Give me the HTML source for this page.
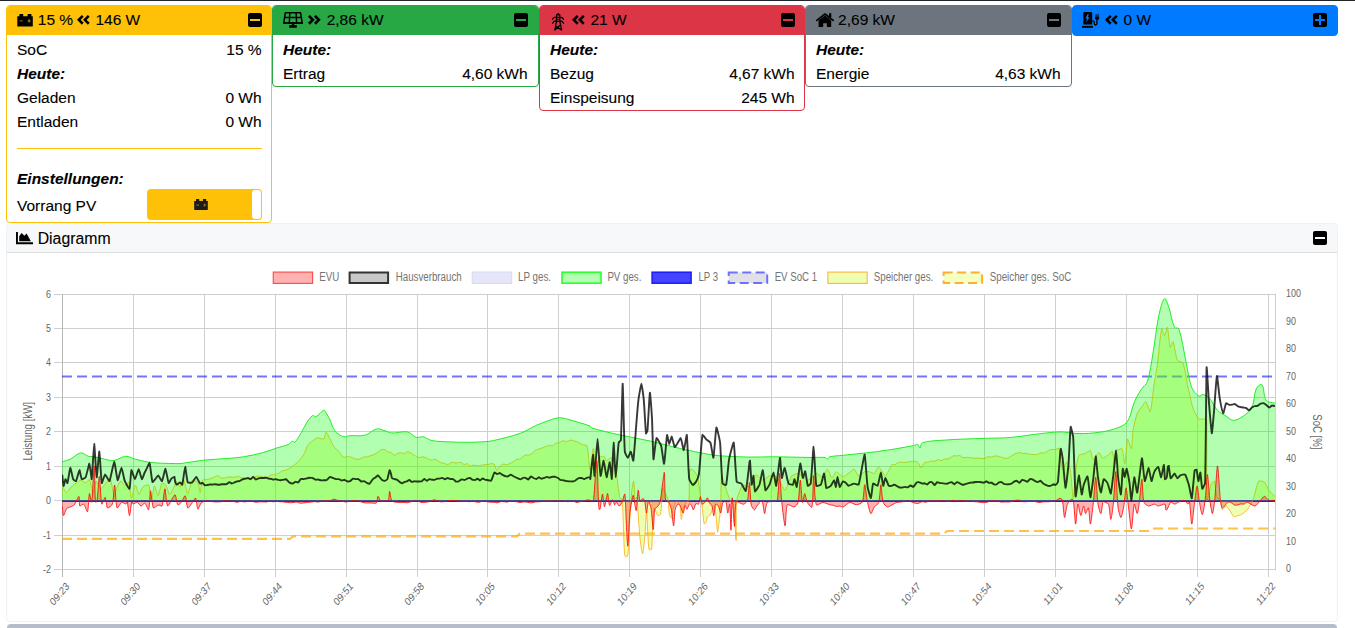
<!DOCTYPE html>
<html><head><meta charset="utf-8">
<style>
*{box-sizing:border-box;margin:0;padding:0}
html,body{width:1355px;height:628px;overflow:hidden;background:#fff}
body{font-family:"Liberation Sans",sans-serif;font-size:15.5px;line-height:24px;color:#000;position:relative;-webkit-text-stroke:0.1px #000}
.a{position:absolute;white-space:nowrap}
.card{position:absolute;top:5px;border:1px solid;border-radius:4px;background:#fff;overflow:hidden}
.hd{position:absolute;left:0;top:0;right:0;height:29px}
.t{position:absolute;white-space:nowrap;line-height:24px;height:24px}
.r{position:absolute;white-space:nowrap;line-height:24px;height:24px;text-align:right}
.bi{font-weight:bold;font-style:italic}
.sq{position:absolute;top:13px;width:14px;height:14px;background:#000;border-radius:2px}
.sq i{position:absolute;left:2px;top:5.9px;width:10px;height:2.3px}
.sq b{position:absolute;left:5.85px;top:2px;width:2.3px;height:10px}
svg{position:absolute;overflow:visible;-webkit-text-stroke:0}
</style></head><body>
<div class="a" style="left:0;top:0;width:1355px;height:1px;background:#20252a"></div>

<!-- card backgrounds -->
<div class="card" style="left:6px;width:266px;height:218px;border-color:#ffc107"><div class="hd" style="background:#ffc107"></div></div>
<div class="card" style="left:272px;width:267px;height:82px;border-color:#28a745"><div class="hd" style="background:#28a745"></div></div>
<div class="card" style="left:539px;width:266px;height:106px;border-color:#dc3545"><div class="hd" style="background:#dc3545"></div></div>
<div class="card" style="left:805px;width:267px;height:82px;border-color:#6c757d"><div class="hd" style="background:#6c757d"></div></div>
<div class="card" style="left:1072px;width:266px;height:31px;border-color:#007bff;background:#007bff"></div>

<!-- squares -->
<div class="sq" style="left:248px"><i style="background:#ffc107"></i></div>
<div class="sq" style="left:514px"><i style="background:#28a745"></i></div>
<div class="sq" style="left:781px"><i style="background:#dc3545"></i></div>
<div class="sq" style="left:1047px"><i style="background:#6c757d"></i></div>
<div class="sq" style="left:1312.8px"><i style="background:#007bff"></i><b style="background:#007bff"></b></div>

<!-- header icons -->
<!-- battery -->
<svg style="left:16.5px;top:13.5px" width="16" height="12.5" viewBox="0 0 16 12.5"><path d="M2.4 0h3.8v2.5h-3.8zM10.6 0h3.8v2.5h-3.8zM0.3 2.3h15.5a0 0 0 0 1 0 0v9.6a0.5 0.5 0 0 1 -0.5 0.5h-14.5a0.5 0.5 0 0 1 -0.5 -0.5z" fill="#000"/><rect x="2.6" y="6.3" width="3.2" height="1.2" fill="#7a5a00"/><rect x="10.5" y="6.3" width="3.2" height="1.2" fill="#7a5a00"/><rect x="11.5" y="5.3" width="1.2" height="3.2" fill="#a0a000"/></svg>
<!-- angle double left (battery) -->
<svg style="left:76.8px;top:15.1px" width="12.7" height="9.7" viewBox="0 0 12.7 9.7"><path d="M5.77 0.92L1.84 4.85L5.77 8.78M11.77 0.92L7.84 4.85L11.77 8.78" fill="none" stroke="#000" stroke-width="2.6" stroke-linecap="butt"/></svg>
<!-- solar panel -->
<svg style="left:283px;top:12px" width="20" height="16" viewBox="0 0 20 16"><path d="M2.3 0.75H17.6L19.2 11H0.75Z" fill="none" stroke="#000" stroke-width="1.5" stroke-linejoin="round"/><path d="M6.8 0.8L6.3 11M13.1 0.8L13.6 11M1.5 5.5H18.3" stroke="#000" stroke-width="1.4" fill="none"/><rect x="0" y="10.3" width="19.9" height="1.5" fill="#000"/><rect x="8.9" y="11.5" width="2.2" height="2" fill="#000"/><rect x="6.2" y="13.1" width="7.6" height="2.7" rx="0.4" fill="#000"/></svg>
<!-- angle double right (pv) -->
<svg style="left:308.1px;top:15.1px" width="12.7" height="9.7" viewBox="0 0 12.7 9.7"><path d="M0.93 0.92L4.86 4.85L0.93 8.78M6.93 0.92L10.86 4.85L6.93 8.78" fill="none" stroke="#000" stroke-width="2.6" stroke-linecap="butt"/></svg>
<!-- pylon -->
<svg style="left:551.8px;top:13px" width="12.4" height="17.7" viewBox="0 0 12.4 17.7"><g fill="none" stroke="#000" stroke-width="1.25" stroke-linecap="round" stroke-linejoin="round"><path d="M4.5 1.9V8.4M7.9 1.9V8.4M4.5 1.9H7.9M4.5 4.2H7.9M4.5 6.3H7.9M4.5 8.4H7.9" stroke-width="1.1"/><path d="M4.5 4.6Q1.6 3.6 0.7 6.3M7.6 4.6Q10.5 3.6 11.5 6.3M4.5 8Q1.6 7.5 0.7 10.3M7.6 8Q10.5 7.5 11.5 10.3"/><path d="M4.5 8.4L2.9 17M7.9 8.4L9.6 17M8.3 12L2.9 17M4.4 13.6L9 16.8"/></g><rect x="5.3" y="0.2" width="1.8" height="1.8" fill="#000"/></svg>
<!-- angle double left (evu) -->
<svg style="left:572.4px;top:15.1px" width="12.7" height="9.7" viewBox="0 0 12.7 9.7"><path d="M5.77 0.92L1.84 4.85L5.77 8.78M11.77 0.92L7.84 4.85L11.77 8.78" fill="none" stroke="#000" stroke-width="2.6" stroke-linecap="butt"/></svg>
<!-- home -->
<svg style="left:815.9px;top:13px" width="18" height="14" viewBox="0 0 18 14"><path d="M0.8 7.4L9 1L17.2 7.4" fill="none" stroke="#000" stroke-width="1.7" stroke-linecap="round" stroke-linejoin="round"/><rect x="13" y="0.2" width="2.3" height="4" fill="#000"/><path d="M2.6 7.2L9 2.4L15.2 7.2V13.9H10.9V10.3H7.2V13.9H2.6Z" fill="#000"/></svg>
<!-- charging station -->
<svg style="left:1082px;top:12px" width="18.1" height="15.8" viewBox="0 0 18.1 15.8"><path d="M1.3 1.4Q1.3 0 2.7 0H8.8Q10.2 0 10.2 1.4V12.5H1.3Z" fill="#000"/><path d="M5.4 2.2L3.4 6.6H5.1L4.2 10.2L7.6 5.3H5.8L6.9 2.2Z" fill="#007bff"/><rect x="0" y="13.9" width="11" height="1.9" fill="#000"/><path d="M10.2 8.8Q12.3 8.8 12.3 10.5V11.6Q12.3 13 13.6 13Q14.9 13 14.9 11.6V7.6" fill="none" stroke="#000" stroke-width="1.3"/><path d="M13.1 4.8H17.1V6.5Q17.1 7.9 15.1 7.9Q13.1 7.9 13.1 6.5Z" fill="#000"/><rect x="13.6" y="2.2" width="1" height="2.8" fill="#000"/><rect x="15.6" y="2.2" width="1" height="2.8" fill="#000"/></svg>
<!-- angle double left (lp) -->
<svg style="left:1105.2px;top:15.1px" width="12.7" height="9.7" viewBox="0 0 12.7 9.7"><path d="M5.77 0.92L1.84 4.85L5.77 8.78M11.77 0.92L7.84 4.85L11.77 8.78" fill="none" stroke="#000" stroke-width="2.6" stroke-linecap="butt"/></svg>

<!-- header texts -->
<div class="t" style="left:37.8px;top:8.2px">15 %</div>
<div class="t" style="left:95.4px;top:8.2px">146 W</div>
<div class="t" style="left:326.7px;top:8.2px">2,86 kW</div>
<div class="t" style="left:590.5px;top:8.2px">21 W</div>
<div class="t" style="left:838.1px;top:8.2px">2,69 kW</div>
<div class="t" style="left:1123.5px;top:8.2px">0 W</div>

<!-- battery body -->
<div class="t" style="left:17px;top:37.5px">SoC</div><div class="r" style="right:1093.4px;top:37.5px">15 %</div>
<div class="t bi" style="left:17px;top:61.5px">Heute:</div>
<div class="t" style="left:17px;top:85.5px">Geladen</div><div class="r" style="right:1093.4px;top:85.5px">0 Wh</div>
<div class="t" style="left:17px;top:109.5px">Entladen</div><div class="r" style="right:1093.4px;top:109.5px">0 Wh</div>
<div class="a" style="left:17px;top:148px;width:245px;height:1px;background:#ffc107"></div>
<div class="t bi" style="left:17px;top:166.8px">Einstellungen:</div>
<div class="t" style="left:17px;top:193.8px">Vorrang PV</div>
<div class="a" style="left:147px;top:189px;width:115px;height:31px;background:#ffc107;border-radius:4px"></div>
<div class="a" style="left:251.8px;top:190.2px;width:9.2px;height:28.8px;background:#fff;border-radius:3px"></div>
<svg style="left:194px;top:199px" width="14" height="11" viewBox="0 0 14 11"><path d="M2 0h3.3v2.2h-3.3zM8.9 0h3.3v2.2h-3.3zM0.2 2h13.6v8.6a0.4 0.4 0 0 1 -0.4 0.4h-12.8a0.4 0.4 0 0 1 -0.4 -0.4z" fill="#1c1c1c"/><rect x="2.2" y="5.6" width="2.8" height="1" fill="#9a7a10"/><rect x="9.3" y="5.6" width="2.8" height="1" fill="#9a7a10"/><rect x="10.2" y="4.7" width="1" height="2.8" fill="#9a7a10"/></svg>

<!-- pv body -->
<div class="t bi" style="left:283px;top:37.5px">Heute:</div>
<div class="t" style="left:283px;top:61.5px">Ertrag</div><div class="r" style="right:827.4px;top:61.5px">4,60 kWh</div>
<!-- evu body -->
<div class="t bi" style="left:550px;top:37.5px">Heute:</div>
<div class="t" style="left:550px;top:61.5px">Bezug</div><div class="r" style="right:560.4px;top:61.5px">4,67 kWh</div>
<div class="t" style="left:550px;top:85.5px">Einspeisung</div><div class="r" style="right:560.4px;top:85.5px">245 Wh</div>
<!-- haus body -->
<div class="t bi" style="left:816px;top:37.5px">Heute:</div>
<div class="t" style="left:816px;top:61.5px">Energie</div><div class="r" style="right:294.4px;top:61.5px">4,63 kWh</div>

<!-- Diagram card -->
<div class="card" style="left:6px;top:223px;width:1332px;height:399px;border-color:#f0f1f3"></div>
<div class="a" style="left:7px;top:224px;width:1330px;height:29px;background:#f7f8f9;border-bottom:1.5px solid #dcdee0;border-radius:3px 3px 0 0"></div>
<svg style="left:16px;top:231.8px" width="17" height="12.2" viewBox="0 0 17 12.2"><path d="M0 0H1.9V10.3H17V12.2H0Z" fill="#000"/><path d="M3.2 9.3V4.2L5.6 0.9L8.4 3.7L10.6 1.6L14.9 9.3Z" fill="#000"/></svg>
<div class="t" style="left:37.7px;top:227px;font-size:15.8px">Diagramm</div>
<div class="sq" style="left:1313px;top:231px"><i style="background:#fff"></i></div>
<div class="a" style="left:7px;top:623.5px;width:1330px;height:10px;background:#b6bdca;border-radius:4px"></div>
<!--CHART--><svg id="chartsvg" width="1355" height="628" viewBox="0 0 1355 628" style="position:absolute;left:0;top:0">
<path d="M54,294.5 H1276 M54,328.5 H1276 M54,362.5 H1276 M54,397.5 H1276 M54,431.5 H1276 M54,466.5 H1276 M54,500.5 H1276 M54,535.5 H1276 M54,569.5 H1276 M62.5,294 V577 M133.5,294 V577 M204.5,294 V577 M275.5,294 V577 M346.5,294 V577 M417.5,294 V577 M487.5,294 V577 M558.5,294 V577 M629.5,294 V577 M700.5,294 V577 M771.5,294 V577 M842.5,294 V577 M913.5,294 V577 M984.5,294 V577 M1055.5,294 V577 M1126.5,294 V577 M1197.5,294 V577 M1268.5,294 V577 M1275.5,294 V569.5" stroke="#cfcfcf" stroke-width="1" fill="none"/>
<path d="M62.5,294 V577" stroke="#b5b5b5" stroke-width="1" fill="none"/>
<defs><clipPath id="pc"><rect x="62" y="288" width="1213" height="283"/></clipPath></defs>
<g clip-path="url(#pc)">
<path d="M62.0,538.9 L290.0,538.9 L293.0,536.4 L517.0,536.4 L520.0,533.7 L944.0,533.7 L947.0,531.0 L1151.0,531.0 L1154.0,528.5 L1275.0,528.5" stroke="rgba(255,165,0,0.7)" stroke-width="2.2" stroke-dasharray="10,5" fill="none"/>
<path d="M62,376.5 H1275" stroke="rgba(0,0,255,0.55)" stroke-width="2.2" stroke-dasharray="10,5" fill="none"/>
<path d="M62,501 H1275" stroke="#1a1aff" stroke-width="2" fill="none"/>
<path d="M62.0,500.6 L62.0,485.9 C62.1,485.9 62.2,485.9 62.3,485.9 C63.1,487.2 65.5,492.5 66.5,492.6 C67.3,492.7 70.2,487.9 71.2,486.9 C72.1,486.0 75.0,483.8 76.0,483.1 C76.9,482.4 79.8,480.2 80.8,480.2 C81.8,480.2 84.7,483.1 85.6,483.1 C86.4,483.0 89.0,479.1 89.4,479.6 C90.5,481.0 92.5,492.4 93.2,492.6 C93.8,492.8 95.2,481.6 96.1,481.1 C96.7,480.8 99.8,488.7 100.9,488.8 C101.9,488.9 105.4,483.3 106.6,482.1 C107.3,481.4 110.1,478.6 110.4,479.2 C111.6,481.5 113.4,495.5 114.2,496.4 C114.7,497.0 116.3,488.7 117.1,486.9 C117.6,485.6 120.1,481.2 120.9,481.1 C121.6,481.1 123.9,485.8 124.7,485.9 C125.5,486.0 128.2,481.5 128.6,482.1 C129.6,484.0 130.7,498.0 131.4,498.3 C132.0,498.6 134.4,485.4 135.3,485.0 C135.9,484.6 138.2,494.3 139.1,494.5 C139.8,494.7 141.8,488.0 142.9,486.9 C143.7,486.1 148.1,484.2 148.6,485.0 C149.9,486.9 150.9,500.2 151.5,500.3 C152.1,500.3 153.6,486.5 154.4,485.9 C154.9,485.5 157.5,495.7 158.2,495.5 C159.0,495.2 160.9,484.6 162.0,483.1 C162.4,482.5 165.4,484.3 165.8,485.0 C166.9,486.6 168.8,494.5 169.6,494.5 C170.6,494.5 174.2,487.0 175.0,485.0 C175.4,484.1 175.2,480.1 175.6,480.2 C176.2,480.5 179.3,487.0 180.0,486.9 C180.8,486.8 182.8,478.6 183.4,479.1 C184.4,480.0 186.9,493.5 187.8,493.6 C188.7,493.7 190.9,481.8 192.3,480.2 C192.9,479.6 197.3,481.5 197.9,482.5 C198.8,484.0 199.7,492.7 200.1,492.5 C200.6,492.2 201.5,482.3 202.3,480.2 C202.5,479.7 204.8,479.8 205.4,479.7 C206.0,479.6 207.8,479.5 208.4,479.3 C209.1,479.2 210.9,478.6 211.5,478.3 C212.1,478.1 213.9,477.1 214.6,476.9 C215.2,476.6 217.3,475.5 217.9,475.7 C218.6,475.8 220.5,477.8 221.3,478.0 C221.9,478.2 223.9,478.0 224.6,477.9 C225.3,477.8 227.3,477.0 227.9,476.9 C228.5,476.8 230.4,477.0 231.1,477.0 C231.7,477.1 233.6,477.5 234.2,477.4 C234.8,477.4 236.7,476.3 237.3,476.3 C237.9,476.3 239.8,477.0 240.4,477.2 C241.0,477.4 242.9,477.9 243.5,478.0 C244.2,478.1 246.2,478.5 246.9,478.5 C247.5,478.5 249.6,478.5 250.2,478.4 C250.9,478.3 252.9,478.0 253.6,477.7 C254.3,477.5 256.2,476.1 256.9,476.0 C257.5,475.8 259.6,476.2 260.3,476.3 C260.9,476.4 262.9,476.8 263.6,476.9 C264.3,477.0 266.6,477.6 267.3,477.4 C268.1,477.2 270.2,475.1 271.0,474.8 C271.7,474.6 274.0,474.8 274.7,474.7 C275.5,474.5 277.7,473.6 278.4,473.3 C279.2,472.9 281.4,471.2 282.2,470.9 C282.9,470.6 285.2,470.5 285.9,470.2 C286.8,469.9 289.5,468.4 290.3,467.9 C291.3,467.3 293.9,465.3 294.8,464.6 C295.7,463.9 298.5,461.5 299.2,460.6 C300.2,459.5 303.0,455.9 303.7,454.6 C304.8,452.7 307.0,446.4 308.2,444.6 C308.8,443.6 311.7,441.6 312.6,440.9 C313.5,440.2 316.1,438.0 317.1,437.9 C318.3,437.7 322.9,439.5 323.8,439.0 C324.7,438.4 325.4,433.2 326.0,432.3 C326.1,432.1 327.1,433.1 327.2,433.4 C327.9,434.5 329.4,437.9 330.0,439.0 C330.8,440.6 332.9,445.4 333.9,446.8 C334.6,447.8 337.6,450.0 338.4,450.9 C339.4,452.0 341.8,456.0 342.8,456.8 C343.3,457.2 345.5,456.9 346.2,456.9 C346.8,456.8 348.9,456.5 349.5,456.6 C350.2,456.8 352.2,457.8 352.9,458.1 C353.5,458.3 355.5,458.9 356.2,459.1 C356.9,459.2 359.2,459.3 359.9,459.1 C360.7,458.9 362.8,457.3 363.6,457.1 C364.3,456.9 366.6,457.0 367.3,456.8 C368.1,456.7 370.2,455.8 371.0,455.5 C371.7,455.3 373.9,454.7 374.6,454.4 C375.4,454.0 377.5,452.4 378.2,452.0 C378.9,451.5 381.0,449.7 381.8,449.5 C382.4,449.3 384.3,449.4 384.9,449.7 C385.6,450.0 387.3,451.7 388.0,452.0 C388.5,452.3 390.5,452.3 391.0,452.5 C391.7,452.9 393.4,455.2 394.1,455.3 C394.7,455.4 396.7,453.8 397.4,453.5 C398.1,453.3 400.1,452.7 400.8,452.7 C401.4,452.7 403.5,453.8 404.1,453.7 C404.8,453.6 406.8,451.7 407.5,451.7 C408.2,451.7 410.5,452.9 411.2,453.2 C411.9,453.6 414.1,455.2 414.9,455.6 C415.6,456.0 417.8,457.4 418.6,457.5 C419.4,457.6 422.2,456.8 423.1,456.9 C424.0,457.0 426.6,458.0 427.5,458.4 C428.2,458.7 430.2,460.1 430.8,460.2 C431.5,460.3 433.5,459.2 434.2,459.3 C434.9,459.3 436.9,460.1 437.5,460.4 C438.3,460.8 440.1,462.5 440.9,462.8 C441.5,463.1 443.6,463.0 444.2,463.2 C444.9,463.4 446.9,464.7 447.6,464.6 C448.5,464.5 451.1,462.6 452.0,462.4 C452.6,462.3 454.5,462.9 455.1,462.9 C455.7,463.0 457.5,462.8 458.1,462.8 C458.8,462.7 460.7,462.4 461.2,462.6 C461.9,462.7 463.6,464.4 464.3,464.6 C464.8,464.7 466.8,463.5 467.3,463.6 C468.0,463.8 469.7,466.0 470.4,466.2 C471.0,466.3 472.8,465.1 473.5,465.1 C474.1,465.0 475.9,465.7 476.5,465.7 C477.4,465.8 479.9,465.5 480.8,465.4 C481.6,465.3 484.1,464.7 485.0,464.6 C485.6,464.5 487.5,464.6 488.2,464.5 C488.8,464.4 490.7,463.5 491.3,463.5 C492.0,463.5 494.1,464.1 494.5,464.6 C495.2,465.5 496.1,470.0 496.7,470.2 C497.2,470.4 499.3,467.1 500.1,466.4 C500.7,465.8 502.7,464.1 503.4,464.0 C504.0,463.8 506.1,464.9 506.7,464.8 C507.4,464.8 509.4,463.6 510.1,463.3 C510.8,463.0 512.8,462.2 513.4,461.8 C514.1,461.4 516.0,459.6 516.8,459.3 C517.4,459.0 519.5,459.3 520.1,459.1 C520.8,458.7 522.5,456.8 523.2,456.4 C523.8,456.0 525.7,455.1 526.4,455.0 C526.9,454.8 528.9,455.2 529.5,455.0 C530.1,454.8 532.0,453.6 532.6,453.2 C533.3,452.6 535.0,450.6 535.7,450.1 C536.3,449.8 538.4,449.2 539.1,449.0 C539.7,448.8 541.7,448.1 542.4,447.9 C543.1,447.6 545.1,446.8 545.7,446.5 C546.4,446.3 548.4,445.4 549.1,445.4 C549.7,445.3 551.8,445.9 552.4,445.8 C553.2,445.6 555.0,443.8 555.8,443.5 C556.4,443.2 558.7,442.9 559.4,442.6 C560.1,442.3 562.3,440.8 563.0,440.7 C563.7,440.6 565.9,441.7 566.6,441.7 C567.4,441.6 569.5,440.2 570.3,440.1 C571.0,440.0 573.4,440.6 574.2,440.9 C574.9,441.1 577.3,442.0 578.1,442.3 C579.0,442.8 581.6,444.4 582.5,444.7 C583.4,445.0 586.7,444.9 587.0,445.7 C588.2,449.9 589.4,469.5 590.0,469.8 C590.6,470.1 592.3,452.7 593.0,448.6 C593.0,448.5 593.6,448.9 593.6,449.0 C594.2,453.7 595.4,471.8 596.0,472.8 C596.5,473.5 597.9,460.3 599.1,457.7 C599.4,456.9 602.9,455.9 603.6,456.2 C604.4,456.5 605.9,460.6 606.6,460.7 C607.4,460.9 610.6,457.2 611.2,457.7 C612.4,459.0 615.1,467.3 615.7,469.8 C616.7,474.0 618.1,486.8 618.7,491.0 C618.9,492.1 619.4,495.5 619.7,496.6 C620.1,497.6 622.2,500.5 622.3,501.7 C622.9,507.4 623.3,525.1 623.6,531.0 C623.8,535.9 624.1,551.2 624.8,555.8 C624.9,556.3 627.2,556.8 627.4,556.4 C628.0,554.9 628.5,548.3 628.7,546.2 C629.0,540.6 629.6,523.8 629.9,518.2 C630.3,512.6 631.3,495.8 631.8,490.2 C632.0,488.4 633.0,482.8 633.4,481.3 C633.4,481.1 633.8,481.8 633.9,481.9 C634.2,485.3 634.5,496.5 635.0,499.1 C635.1,499.5 636.8,496.6 636.9,497.0 C637.6,501.7 638.4,519.1 638.9,524.6 C639.2,528.7 640.2,540.9 640.8,545.0 C641.0,546.8 642.4,554.4 642.7,553.9 C643.2,553.1 644.3,541.7 644.6,538.6 C645.1,533.3 646.1,512.4 646.5,511.8 C646.8,511.4 647.5,529.2 647.8,533.5 C648.0,536.7 648.4,546.7 649.0,549.4 C649.1,549.9 651.5,549.9 651.6,549.4 C652.3,543.7 652.5,524.4 652.9,518.2 C653.0,516.2 653.7,508.9 654.1,508.0 C654.3,507.7 655.7,511.1 656.1,511.8 C656.4,512.6 657.4,515.4 658.0,515.7 C658.3,515.9 660.4,514.9 660.5,514.4 C661.2,511.6 661.5,502.2 661.8,499.1 C662.0,496.9 662.0,488.2 662.6,488.0 C663.1,487.8 666.4,495.2 667.1,497.0 C667.5,497.9 668.0,500.7 668.2,501.7 C668.5,504.2 668.9,511.9 669.4,514.4 C669.6,515.2 671.1,518.6 671.3,518.2 C671.9,517.3 672.6,510.0 673.2,508.0 C673.7,506.7 675.7,501.9 676.4,501.7 C677.0,501.4 679.7,504.5 680.0,505.5 C680.7,508.1 680.9,519.2 681.3,519.5 C681.6,519.7 682.5,510.2 683.2,508.0 C683.6,506.8 685.6,503.3 686.4,502.3 C686.7,501.8 688.9,501.0 688.9,500.4 C689.5,494.5 689.1,475.4 689.8,469.8 C689.9,469.3 692.4,469.5 692.8,469.8 C693.9,470.7 697.0,474.4 697.4,475.9 C698.6,480.7 700.3,496.0 701.0,501.0 C701.2,502.4 702.1,506.6 702.3,508.0 C702.7,511.2 703.5,521.6 704.2,523.9 C704.3,524.4 705.9,522.5 706.1,522.0 C706.5,521.1 706.9,517.8 707.4,516.9 C707.8,516.3 710.2,515.1 710.6,514.4 C711.2,513.3 712.0,509.2 712.5,508.0 C712.7,507.4 714.2,505.1 714.4,505.5 C715.0,507.1 716.0,515.7 716.3,518.2 C716.6,521.0 717.3,532.2 717.6,532.2 C717.9,532.2 719.2,521.0 719.5,518.2 C719.8,515.0 720.6,505.5 720.8,502.3 C721.0,497.0 720.9,477.6 721.6,475.9 C721.9,474.9 725.0,486.3 725.9,488.9 C726.8,491.3 729.3,498.7 730.3,501.0 C730.8,502.0 733.3,504.4 733.5,505.5 C734.5,512.3 735.8,540.9 736.1,540.5 C736.4,540.0 735.8,508.8 736.7,501.0 C737.1,497.6 740.9,486.9 742.7,484.9 C743.5,484.1 748.6,487.6 749.5,486.9 C751.2,485.5 754.5,475.5 756.1,474.7 C757.2,474.1 761.4,480.1 762.8,480.2 C764.1,480.3 768.1,476.1 769.5,475.8 C770.7,475.5 775.2,476.2 776.2,476.9 C777.4,477.7 779.8,481.9 780.7,483.2 C781.6,484.6 784.3,490.8 785.1,490.3 C786.6,489.3 789.9,478.1 791.8,475.8 C792.6,474.7 797.2,473.5 798.5,473.5 C799.4,473.6 802.1,475.7 802.9,476.3 C803.9,477.0 806.4,480.1 807.4,480.2 C808.2,480.3 811.0,478.2 811.9,477.6 C812.8,476.9 815.3,473.6 816.3,473.5 C817.5,473.5 822.0,477.3 823.0,476.9 C824.2,476.4 826.6,469.0 827.5,469.1 C828.4,469.2 830.9,477.7 831.9,478.0 C832.7,478.2 835.3,471.9 836.4,471.8 C837.5,471.6 841.7,476.8 843.1,476.9 C844.4,476.9 848.4,473.3 849.7,472.4 C850.6,471.8 853.5,468.8 854.2,469.1 C855.2,469.5 857.5,475.5 858.6,475.8 C859.8,476.0 863.9,471.8 865.3,471.3 C866.1,471.0 868.9,471.7 869.8,471.9 C870.7,472.1 873.6,473.9 874.2,473.5 C875.4,472.9 877.8,466.7 878.7,466.9 C880.0,467.1 884.2,476.0 885.4,475.8 C886.8,475.5 890.5,466.4 892.1,464.6 C892.5,464.2 894.7,464.7 895.3,464.5 C896.0,464.2 897.8,462.5 898.5,462.2 C899.1,462.0 901.1,462.3 901.8,462.3 C902.4,462.3 904.4,462.4 905.0,462.4 C905.8,462.3 908.3,461.9 909.2,461.7 C910.0,461.6 912.5,461.2 913.4,461.3 C914.3,461.3 917.2,461.8 917.8,462.4 C918.7,463.2 920.5,468.0 921.2,468.0 C921.8,468.0 923.6,463.2 924.5,462.4 C925.0,462.0 927.2,462.4 927.9,462.2 C928.5,462.1 930.5,461.0 931.2,460.9 C931.8,460.8 933.9,461.4 934.5,461.3 C935.2,461.2 937.2,459.9 937.9,459.8 C938.5,459.7 940.6,460.6 941.2,460.6 C941.9,460.5 943.9,459.2 944.6,459.1 C945.4,458.8 948.2,458.9 949.0,458.6 C950.0,458.3 952.5,456.0 953.5,455.7 C954.0,455.5 956.0,456.1 956.6,456.0 C957.2,456.0 959.2,455.2 959.7,455.4 C960.4,455.6 962.2,457.4 962.8,457.6 C963.4,457.8 965.3,457.3 966.0,457.3 C966.6,457.3 968.5,457.6 969.1,457.6 C969.7,457.7 971.6,458.0 972.2,458.0 C972.8,458.1 974.7,458.0 975.3,458.0 C975.9,458.0 977.8,458.1 978.4,458.2 C979.1,458.2 980.9,458.5 981.6,458.5 C982.2,458.5 984.1,458.6 984.7,458.4 C985.4,458.2 987.3,456.7 988.0,456.6 C988.7,456.5 990.7,457.2 991.4,457.1 C992.0,457.1 994.0,456.1 994.7,456.0 C995.4,455.9 997.4,456.0 998.1,456.2 C999.0,456.3 1001.6,457.4 1002.5,457.6 C1003.4,457.8 1006.1,458.5 1007.0,458.4 C1007.9,458.2 1010.5,456.4 1011.4,455.9 C1012.3,455.4 1014.9,453.9 1015.9,453.5 C1016.6,453.2 1018.7,452.5 1019.4,452.5 C1020.2,452.5 1022.3,453.4 1023.0,453.5 C1023.7,453.5 1025.9,453.3 1026.6,453.4 C1027.3,453.4 1029.4,454.2 1030.1,454.3 C1030.8,454.4 1033.0,454.6 1033.7,454.6 C1034.4,454.6 1036.7,454.5 1037.4,454.4 C1038.2,454.2 1040.4,453.0 1041.1,452.9 C1041.8,452.7 1044.2,453.3 1044.8,453.0 C1045.8,452.7 1048.3,450.3 1049.3,450.0 C1050.1,449.6 1052.9,449.5 1053.8,449.5 C1054.0,449.5 1054.8,449.7 1055.0,449.6 C1055.8,449.5 1058.6,448.0 1058.8,448.7 C1060.1,452.1 1061.6,467.8 1062.6,469.7 C1063.1,470.4 1065.7,462.0 1066.5,462.0 C1067.2,462.0 1070.0,468.0 1070.3,469.7 C1071.3,475.3 1072.6,498.3 1073.2,498.3 C1073.7,498.3 1075.3,475.4 1076.0,469.7 C1076.4,466.8 1077.6,457.6 1078.9,455.4 C1079.5,454.3 1084.3,454.0 1085.6,453.4 C1086.6,453.0 1089.8,450.1 1090.4,450.6 C1091.3,451.4 1092.3,459.9 1093.2,460.1 C1094.1,460.3 1097.8,452.7 1098.9,452.5 C1099.7,452.3 1101.8,457.9 1102.8,458.2 C1103.5,458.5 1106.6,456.0 1107.5,455.4 C1108.5,454.7 1111.9,451.0 1112.3,451.5 C1113.2,452.7 1113.9,463.9 1114.2,463.9 C1114.6,463.9 1115.1,453.6 1116.1,451.5 C1116.7,450.5 1121.4,447.9 1121.9,448.7 C1123.1,450.4 1124.3,464.7 1124.7,463.9 C1125.5,462.8 1126.7,441.3 1127.6,439.1 C1128.0,438.2 1131.0,449.3 1131.4,448.7 C1132.1,447.6 1132.4,434.0 1133.0,430.4 C1133.5,427.0 1136.1,416.5 1137.3,413.2 C1137.8,411.8 1140.6,408.2 1141.6,406.9 C1142.4,405.9 1145.2,401.4 1145.9,401.8 C1146.9,402.4 1149.7,412.7 1150.2,411.8 C1151.3,409.8 1153.0,392.1 1153.7,387.2 C1154.4,382.6 1156.7,369.1 1157.3,364.5 C1158.3,357.4 1160.4,333.4 1161.6,328.7 C1161.9,327.7 1164.0,336.0 1164.5,335.9 C1165.1,335.7 1167.0,326.6 1167.4,327.3 C1168.1,328.8 1169.4,345.1 1170.2,347.3 C1170.5,348.0 1172.7,340.9 1173.1,341.6 C1174.2,343.5 1175.9,357.0 1177.4,360.2 C1177.9,361.3 1182.7,362.0 1183.1,363.1 C1184.7,366.9 1186.5,380.3 1187.4,384.6 C1188.5,389.5 1191.6,404.2 1193.2,408.9 C1193.9,411.1 1197.4,417.6 1198.9,419.0 C1199.6,419.6 1203.5,418.8 1204.6,419.0 C1205.1,419.0 1206.6,419.6 1206.7,420.0 C1207.1,435.8 1206.3,489.4 1207.0,500.3 C1207.2,502.4 1209.8,487.8 1210.9,485.0 C1211.2,484.0 1214.0,480.6 1214.3,481.1 C1215.2,482.9 1215.7,493.6 1216.6,496.4 C1216.9,497.4 1220.0,499.3 1220.4,500.3 C1221.2,502.0 1221.6,509.1 1222.3,509.8 C1222.7,510.2 1225.4,505.9 1226.1,506.0 C1227.0,506.1 1229.2,509.9 1230.0,510.9 C1230.8,512.0 1232.8,515.9 1233.8,516.5 C1234.3,516.9 1236.9,516.0 1237.6,515.8 C1238.4,515.6 1240.8,515.0 1241.4,514.6 C1242.7,513.8 1246.2,511.0 1247.2,509.8 C1248.5,508.1 1252.1,502.3 1252.9,500.3 C1254.4,496.6 1256.9,484.0 1258.6,481.1 C1259.1,480.3 1263.6,481.4 1264.4,482.1 C1265.7,483.3 1268.0,489.1 1269.1,490.7 C1270.1,492.0 1273.8,495.3 1275.0,496.4 L1275.0,500.6 Z" fill="rgba(200,255,0,0.3)" stroke="none"/>
<path d="M62.0,485.9 C62.1,485.9 62.2,485.9 62.3,485.9 C63.1,487.2 65.5,492.5 66.5,492.6 C67.3,492.7 70.2,487.9 71.2,486.9 C72.1,486.0 75.0,483.8 76.0,483.1 C76.9,482.4 79.8,480.2 80.8,480.2 C81.8,480.2 84.7,483.1 85.6,483.1 C86.4,483.0 89.0,479.1 89.4,479.6 C90.5,481.0 92.5,492.4 93.2,492.6 C93.8,492.8 95.2,481.6 96.1,481.1 C96.7,480.8 99.8,488.7 100.9,488.8 C101.9,488.9 105.4,483.3 106.6,482.1 C107.3,481.4 110.1,478.6 110.4,479.2 C111.6,481.5 113.4,495.5 114.2,496.4 C114.7,497.0 116.3,488.7 117.1,486.9 C117.6,485.6 120.1,481.2 120.9,481.1 C121.6,481.1 123.9,485.8 124.7,485.9 C125.5,486.0 128.2,481.5 128.6,482.1 C129.6,484.0 130.7,498.0 131.4,498.3 C132.0,498.6 134.4,485.4 135.3,485.0 C135.9,484.6 138.2,494.3 139.1,494.5 C139.8,494.7 141.8,488.0 142.9,486.9 C143.7,486.1 148.1,484.2 148.6,485.0 C149.9,486.9 150.9,500.2 151.5,500.3 C152.1,500.3 153.6,486.5 154.4,485.9 C154.9,485.5 157.5,495.7 158.2,495.5 C159.0,495.2 160.9,484.6 162.0,483.1 C162.4,482.5 165.4,484.3 165.8,485.0 C166.9,486.6 168.8,494.5 169.6,494.5 C170.6,494.5 174.2,487.0 175.0,485.0 C175.4,484.1 175.2,480.1 175.6,480.2 C176.2,480.5 179.3,487.0 180.0,486.9 C180.8,486.8 182.8,478.6 183.4,479.1 C184.4,480.0 186.9,493.5 187.8,493.6 C188.7,493.7 190.9,481.8 192.3,480.2 C192.9,479.6 197.3,481.5 197.9,482.5 C198.8,484.0 199.7,492.7 200.1,492.5 C200.6,492.2 201.5,482.3 202.3,480.2 C202.5,479.7 204.8,479.8 205.4,479.7 C206.0,479.6 207.8,479.5 208.4,479.3 C209.1,479.2 210.9,478.6 211.5,478.3 C212.1,478.1 213.9,477.1 214.6,476.9 C215.2,476.6 217.3,475.5 217.9,475.7 C218.6,475.8 220.5,477.8 221.3,478.0 C221.9,478.2 223.9,478.0 224.6,477.9 C225.3,477.8 227.3,477.0 227.9,476.9 C228.5,476.8 230.4,477.0 231.1,477.0 C231.7,477.1 233.6,477.5 234.2,477.4 C234.8,477.4 236.7,476.3 237.3,476.3 C237.9,476.3 239.8,477.0 240.4,477.2 C241.0,477.4 242.9,477.9 243.5,478.0 C244.2,478.1 246.2,478.5 246.9,478.5 C247.5,478.5 249.6,478.5 250.2,478.4 C250.9,478.3 252.9,478.0 253.6,477.7 C254.3,477.5 256.2,476.1 256.9,476.0 C257.5,475.8 259.6,476.2 260.3,476.3 C260.9,476.4 262.9,476.8 263.6,476.9 C264.3,477.0 266.6,477.6 267.3,477.4 C268.1,477.2 270.2,475.1 271.0,474.8 C271.7,474.6 274.0,474.8 274.7,474.7 C275.5,474.5 277.7,473.6 278.4,473.3 C279.2,472.9 281.4,471.2 282.2,470.9 C282.9,470.6 285.2,470.5 285.9,470.2 C286.8,469.9 289.5,468.4 290.3,467.9 C291.3,467.3 293.9,465.3 294.8,464.6 C295.7,463.9 298.5,461.5 299.2,460.6 C300.2,459.5 303.0,455.9 303.7,454.6 C304.8,452.7 307.0,446.4 308.2,444.6 C308.8,443.6 311.7,441.6 312.6,440.9 C313.5,440.2 316.1,438.0 317.1,437.9 C318.3,437.7 322.9,439.5 323.8,439.0 C324.7,438.4 325.4,433.2 326.0,432.3 C326.1,432.1 327.1,433.1 327.2,433.4 C327.9,434.5 329.4,437.9 330.0,439.0 C330.8,440.6 332.9,445.4 333.9,446.8 C334.6,447.8 337.6,450.0 338.4,450.9 C339.4,452.0 341.8,456.0 342.8,456.8 C343.3,457.2 345.5,456.9 346.2,456.9 C346.8,456.8 348.9,456.5 349.5,456.6 C350.2,456.8 352.2,457.8 352.9,458.1 C353.5,458.3 355.5,458.9 356.2,459.1 C356.9,459.2 359.2,459.3 359.9,459.1 C360.7,458.9 362.8,457.3 363.6,457.1 C364.3,456.9 366.6,457.0 367.3,456.8 C368.1,456.7 370.2,455.8 371.0,455.5 C371.7,455.3 373.9,454.7 374.6,454.4 C375.4,454.0 377.5,452.4 378.2,452.0 C378.9,451.5 381.0,449.7 381.8,449.5 C382.4,449.3 384.3,449.4 384.9,449.7 C385.6,450.0 387.3,451.7 388.0,452.0 C388.5,452.3 390.5,452.3 391.0,452.5 C391.7,452.9 393.4,455.2 394.1,455.3 C394.7,455.4 396.7,453.8 397.4,453.5 C398.1,453.3 400.1,452.7 400.8,452.7 C401.4,452.7 403.5,453.8 404.1,453.7 C404.8,453.6 406.8,451.7 407.5,451.7 C408.2,451.7 410.5,452.9 411.2,453.2 C411.9,453.6 414.1,455.2 414.9,455.6 C415.6,456.0 417.8,457.4 418.6,457.5 C419.4,457.6 422.2,456.8 423.1,456.9 C424.0,457.0 426.6,458.0 427.5,458.4 C428.2,458.7 430.2,460.1 430.8,460.2 C431.5,460.3 433.5,459.2 434.2,459.3 C434.9,459.3 436.9,460.1 437.5,460.4 C438.3,460.8 440.1,462.5 440.9,462.8 C441.5,463.1 443.6,463.0 444.2,463.2 C444.9,463.4 446.9,464.7 447.6,464.6 C448.5,464.5 451.1,462.6 452.0,462.4 C452.6,462.3 454.5,462.9 455.1,462.9 C455.7,463.0 457.5,462.8 458.1,462.8 C458.8,462.7 460.7,462.4 461.2,462.6 C461.9,462.7 463.6,464.4 464.3,464.6 C464.8,464.7 466.8,463.5 467.3,463.6 C468.0,463.8 469.7,466.0 470.4,466.2 C471.0,466.3 472.8,465.1 473.5,465.1 C474.1,465.0 475.9,465.7 476.5,465.7 C477.4,465.8 479.9,465.5 480.8,465.4 C481.6,465.3 484.1,464.7 485.0,464.6 C485.6,464.5 487.5,464.6 488.2,464.5 C488.8,464.4 490.7,463.5 491.3,463.5 C492.0,463.5 494.1,464.1 494.5,464.6 C495.2,465.5 496.1,470.0 496.7,470.2 C497.2,470.4 499.3,467.1 500.1,466.4 C500.7,465.8 502.7,464.1 503.4,464.0 C504.0,463.8 506.1,464.9 506.7,464.8 C507.4,464.8 509.4,463.6 510.1,463.3 C510.8,463.0 512.8,462.2 513.4,461.8 C514.1,461.4 516.0,459.6 516.8,459.3 C517.4,459.0 519.5,459.3 520.1,459.1 C520.8,458.7 522.5,456.8 523.2,456.4 C523.8,456.0 525.7,455.1 526.4,455.0 C526.9,454.8 528.9,455.2 529.5,455.0 C530.1,454.8 532.0,453.6 532.6,453.2 C533.3,452.6 535.0,450.6 535.7,450.1 C536.3,449.8 538.4,449.2 539.1,449.0 C539.7,448.8 541.7,448.1 542.4,447.9 C543.1,447.6 545.1,446.8 545.7,446.5 C546.4,446.3 548.4,445.4 549.1,445.4 C549.7,445.3 551.8,445.9 552.4,445.8 C553.2,445.6 555.0,443.8 555.8,443.5 C556.4,443.2 558.7,442.9 559.4,442.6 C560.1,442.3 562.3,440.8 563.0,440.7 C563.7,440.6 565.9,441.7 566.6,441.7 C567.4,441.6 569.5,440.2 570.3,440.1 C571.0,440.0 573.4,440.6 574.2,440.9 C574.9,441.1 577.3,442.0 578.1,442.3 C579.0,442.8 581.6,444.4 582.5,444.7 C583.4,445.0 586.7,444.9 587.0,445.7 C588.2,449.9 589.4,469.5 590.0,469.8 C590.6,470.1 592.3,452.7 593.0,448.6 C593.0,448.5 593.6,448.9 593.6,449.0 C594.2,453.7 595.4,471.8 596.0,472.8 C596.5,473.5 597.9,460.3 599.1,457.7 C599.4,456.9 602.9,455.9 603.6,456.2 C604.4,456.5 605.9,460.6 606.6,460.7 C607.4,460.9 610.6,457.2 611.2,457.7 C612.4,459.0 615.1,467.3 615.7,469.8 C616.7,474.0 618.1,486.8 618.7,491.0 C618.9,492.1 619.4,495.5 619.7,496.6 C620.1,497.6 622.2,500.5 622.3,501.7 C622.9,507.4 623.3,525.1 623.6,531.0 C623.8,535.9 624.1,551.2 624.8,555.8 C624.9,556.3 627.2,556.8 627.4,556.4 C628.0,554.9 628.5,548.3 628.7,546.2 C629.0,540.6 629.6,523.8 629.9,518.2 C630.3,512.6 631.3,495.8 631.8,490.2 C632.0,488.4 633.0,482.8 633.4,481.3 C633.4,481.1 633.8,481.8 633.9,481.9 C634.2,485.3 634.5,496.5 635.0,499.1 C635.1,499.5 636.8,496.6 636.9,497.0 C637.6,501.7 638.4,519.1 638.9,524.6 C639.2,528.7 640.2,540.9 640.8,545.0 C641.0,546.8 642.4,554.4 642.7,553.9 C643.2,553.1 644.3,541.7 644.6,538.6 C645.1,533.3 646.1,512.4 646.5,511.8 C646.8,511.4 647.5,529.2 647.8,533.5 C648.0,536.7 648.4,546.7 649.0,549.4 C649.1,549.9 651.5,549.9 651.6,549.4 C652.3,543.7 652.5,524.4 652.9,518.2 C653.0,516.2 653.7,508.9 654.1,508.0 C654.3,507.7 655.7,511.1 656.1,511.8 C656.4,512.6 657.4,515.4 658.0,515.7 C658.3,515.9 660.4,514.9 660.5,514.4 C661.2,511.6 661.5,502.2 661.8,499.1 C662.0,496.9 662.0,488.2 662.6,488.0 C663.1,487.8 666.4,495.2 667.1,497.0 C667.5,497.9 668.0,500.7 668.2,501.7 C668.5,504.2 668.9,511.9 669.4,514.4 C669.6,515.2 671.1,518.6 671.3,518.2 C671.9,517.3 672.6,510.0 673.2,508.0 C673.7,506.7 675.7,501.9 676.4,501.7 C677.0,501.4 679.7,504.5 680.0,505.5 C680.7,508.1 680.9,519.2 681.3,519.5 C681.6,519.7 682.5,510.2 683.2,508.0 C683.6,506.8 685.6,503.3 686.4,502.3 C686.7,501.8 688.9,501.0 688.9,500.4 C689.5,494.5 689.1,475.4 689.8,469.8 C689.9,469.3 692.4,469.5 692.8,469.8 C693.9,470.7 697.0,474.4 697.4,475.9 C698.6,480.7 700.3,496.0 701.0,501.0 C701.2,502.4 702.1,506.6 702.3,508.0 C702.7,511.2 703.5,521.6 704.2,523.9 C704.3,524.4 705.9,522.5 706.1,522.0 C706.5,521.1 706.9,517.8 707.4,516.9 C707.8,516.3 710.2,515.1 710.6,514.4 C711.2,513.3 712.0,509.2 712.5,508.0 C712.7,507.4 714.2,505.1 714.4,505.5 C715.0,507.1 716.0,515.7 716.3,518.2 C716.6,521.0 717.3,532.2 717.6,532.2 C717.9,532.2 719.2,521.0 719.5,518.2 C719.8,515.0 720.6,505.5 720.8,502.3 C721.0,497.0 720.9,477.6 721.6,475.9 C721.9,474.9 725.0,486.3 725.9,488.9 C726.8,491.3 729.3,498.7 730.3,501.0 C730.8,502.0 733.3,504.4 733.5,505.5 C734.5,512.3 735.8,540.9 736.1,540.5 C736.4,540.0 735.8,508.8 736.7,501.0 C737.1,497.6 740.9,486.9 742.7,484.9 C743.5,484.1 748.6,487.6 749.5,486.9 C751.2,485.5 754.5,475.5 756.1,474.7 C757.2,474.1 761.4,480.1 762.8,480.2 C764.1,480.3 768.1,476.1 769.5,475.8 C770.7,475.5 775.2,476.2 776.2,476.9 C777.4,477.7 779.8,481.9 780.7,483.2 C781.6,484.6 784.3,490.8 785.1,490.3 C786.6,489.3 789.9,478.1 791.8,475.8 C792.6,474.7 797.2,473.5 798.5,473.5 C799.4,473.6 802.1,475.7 802.9,476.3 C803.9,477.0 806.4,480.1 807.4,480.2 C808.2,480.3 811.0,478.2 811.9,477.6 C812.8,476.9 815.3,473.6 816.3,473.5 C817.5,473.5 822.0,477.3 823.0,476.9 C824.2,476.4 826.6,469.0 827.5,469.1 C828.4,469.2 830.9,477.7 831.9,478.0 C832.7,478.2 835.3,471.9 836.4,471.8 C837.5,471.6 841.7,476.8 843.1,476.9 C844.4,476.9 848.4,473.3 849.7,472.4 C850.6,471.8 853.5,468.8 854.2,469.1 C855.2,469.5 857.5,475.5 858.6,475.8 C859.8,476.0 863.9,471.8 865.3,471.3 C866.1,471.0 868.9,471.7 869.8,471.9 C870.7,472.1 873.6,473.9 874.2,473.5 C875.4,472.9 877.8,466.7 878.7,466.9 C880.0,467.1 884.2,476.0 885.4,475.8 C886.8,475.5 890.5,466.4 892.1,464.6 C892.5,464.2 894.7,464.7 895.3,464.5 C896.0,464.2 897.8,462.5 898.5,462.2 C899.1,462.0 901.1,462.3 901.8,462.3 C902.4,462.3 904.4,462.4 905.0,462.4 C905.8,462.3 908.3,461.9 909.2,461.7 C910.0,461.6 912.5,461.2 913.4,461.3 C914.3,461.3 917.2,461.8 917.8,462.4 C918.7,463.2 920.5,468.0 921.2,468.0 C921.8,468.0 923.6,463.2 924.5,462.4 C925.0,462.0 927.2,462.4 927.9,462.2 C928.5,462.1 930.5,461.0 931.2,460.9 C931.8,460.8 933.9,461.4 934.5,461.3 C935.2,461.2 937.2,459.9 937.9,459.8 C938.5,459.7 940.6,460.6 941.2,460.6 C941.9,460.5 943.9,459.2 944.6,459.1 C945.4,458.8 948.2,458.9 949.0,458.6 C950.0,458.3 952.5,456.0 953.5,455.7 C954.0,455.5 956.0,456.1 956.6,456.0 C957.2,456.0 959.2,455.2 959.7,455.4 C960.4,455.6 962.2,457.4 962.8,457.6 C963.4,457.8 965.3,457.3 966.0,457.3 C966.6,457.3 968.5,457.6 969.1,457.6 C969.7,457.7 971.6,458.0 972.2,458.0 C972.8,458.1 974.7,458.0 975.3,458.0 C975.9,458.0 977.8,458.1 978.4,458.2 C979.1,458.2 980.9,458.5 981.6,458.5 C982.2,458.5 984.1,458.6 984.7,458.4 C985.4,458.2 987.3,456.7 988.0,456.6 C988.7,456.5 990.7,457.2 991.4,457.1 C992.0,457.1 994.0,456.1 994.7,456.0 C995.4,455.9 997.4,456.0 998.1,456.2 C999.0,456.3 1001.6,457.4 1002.5,457.6 C1003.4,457.8 1006.1,458.5 1007.0,458.4 C1007.9,458.2 1010.5,456.4 1011.4,455.9 C1012.3,455.4 1014.9,453.9 1015.9,453.5 C1016.6,453.2 1018.7,452.5 1019.4,452.5 C1020.2,452.5 1022.3,453.4 1023.0,453.5 C1023.7,453.5 1025.9,453.3 1026.6,453.4 C1027.3,453.4 1029.4,454.2 1030.1,454.3 C1030.8,454.4 1033.0,454.6 1033.7,454.6 C1034.4,454.6 1036.7,454.5 1037.4,454.4 C1038.2,454.2 1040.4,453.0 1041.1,452.9 C1041.8,452.7 1044.2,453.3 1044.8,453.0 C1045.8,452.7 1048.3,450.3 1049.3,450.0 C1050.1,449.6 1052.9,449.5 1053.8,449.5 C1054.0,449.5 1054.8,449.7 1055.0,449.6 C1055.8,449.5 1058.6,448.0 1058.8,448.7 C1060.1,452.1 1061.6,467.8 1062.6,469.7 C1063.1,470.4 1065.7,462.0 1066.5,462.0 C1067.2,462.0 1070.0,468.0 1070.3,469.7 C1071.3,475.3 1072.6,498.3 1073.2,498.3 C1073.7,498.3 1075.3,475.4 1076.0,469.7 C1076.4,466.8 1077.6,457.6 1078.9,455.4 C1079.5,454.3 1084.3,454.0 1085.6,453.4 C1086.6,453.0 1089.8,450.1 1090.4,450.6 C1091.3,451.4 1092.3,459.9 1093.2,460.1 C1094.1,460.3 1097.8,452.7 1098.9,452.5 C1099.7,452.3 1101.8,457.9 1102.8,458.2 C1103.5,458.5 1106.6,456.0 1107.5,455.4 C1108.5,454.7 1111.9,451.0 1112.3,451.5 C1113.2,452.7 1113.9,463.9 1114.2,463.9 C1114.6,463.9 1115.1,453.6 1116.1,451.5 C1116.7,450.5 1121.4,447.9 1121.9,448.7 C1123.1,450.4 1124.3,464.7 1124.7,463.9 C1125.5,462.8 1126.7,441.3 1127.6,439.1 C1128.0,438.2 1131.0,449.3 1131.4,448.7 C1132.1,447.6 1132.4,434.0 1133.0,430.4 C1133.5,427.0 1136.1,416.5 1137.3,413.2 C1137.8,411.8 1140.6,408.2 1141.6,406.9 C1142.4,405.9 1145.2,401.4 1145.9,401.8 C1146.9,402.4 1149.7,412.7 1150.2,411.8 C1151.3,409.8 1153.0,392.1 1153.7,387.2 C1154.4,382.6 1156.7,369.1 1157.3,364.5 C1158.3,357.4 1160.4,333.4 1161.6,328.7 C1161.9,327.7 1164.0,336.0 1164.5,335.9 C1165.1,335.7 1167.0,326.6 1167.4,327.3 C1168.1,328.8 1169.4,345.1 1170.2,347.3 C1170.5,348.0 1172.7,340.9 1173.1,341.6 C1174.2,343.5 1175.9,357.0 1177.4,360.2 C1177.9,361.3 1182.7,362.0 1183.1,363.1 C1184.7,366.9 1186.5,380.3 1187.4,384.6 C1188.5,389.5 1191.6,404.2 1193.2,408.9 C1193.9,411.1 1197.4,417.6 1198.9,419.0 C1199.6,419.6 1203.5,418.8 1204.6,419.0 C1205.1,419.0 1206.6,419.6 1206.7,420.0 C1207.1,435.8 1206.3,489.4 1207.0,500.3 C1207.2,502.4 1209.8,487.8 1210.9,485.0 C1211.2,484.0 1214.0,480.6 1214.3,481.1 C1215.2,482.9 1215.7,493.6 1216.6,496.4 C1216.9,497.4 1220.0,499.3 1220.4,500.3 C1221.2,502.0 1221.6,509.1 1222.3,509.8 C1222.7,510.2 1225.4,505.9 1226.1,506.0 C1227.0,506.1 1229.2,509.9 1230.0,510.9 C1230.8,512.0 1232.8,515.9 1233.8,516.5 C1234.3,516.9 1236.9,516.0 1237.6,515.8 C1238.4,515.6 1240.8,515.0 1241.4,514.6 C1242.7,513.8 1246.2,511.0 1247.2,509.8 C1248.5,508.1 1252.1,502.3 1252.9,500.3 C1254.4,496.6 1256.9,484.0 1258.6,481.1 C1259.1,480.3 1263.6,481.4 1264.4,482.1 C1265.7,483.3 1268.0,489.1 1269.1,490.7 C1270.1,492.0 1273.8,495.3 1275.0,496.4" stroke="rgba(255,165,0,0.75)" stroke-width="1" fill="none" stroke-linejoin="round"/>
<path d="M62.0,500.6 L62.0,461.7 C62.1,461.7 62.2,461.7 62.3,461.7 C65.1,460.8 67.6,460.4 70.3,459.2 C74.1,457.3 77.0,453.5 80.8,452.9 C83.4,452.5 85.7,455.5 88.4,456.3 C90.0,456.8 91.6,456.4 93.2,456.7 C97.3,457.4 100.6,458.4 104.7,459.2 C108.0,459.8 111.0,461.0 114.2,460.5 C118.3,459.9 121.7,456.6 125.7,456.3 C129.0,456.1 131.9,458.3 135.3,459.2 C140.6,460.5 145.1,461.8 150.5,462.4 C159.0,463.4 166.4,463.3 175.0,463.6 C177.1,463.6 179.0,463.8 181.1,463.5 C189.0,462.6 195.6,461.0 203.4,460.2 C211.2,459.3 217.9,459.3 225.7,458.6 C232.0,458.1 237.4,457.8 243.5,456.8 C250.6,455.7 256.7,454.2 263.6,452.4 C268.4,451.1 272.3,449.4 277.0,447.9 C280.8,446.7 284.4,446.2 288.1,444.6 C289.9,443.8 290.9,441.8 292.6,441.2 C293.3,441.0 294.3,442.9 294.8,442.3 C297.4,439.8 299.3,435.9 301.5,432.3 C303.6,428.9 304.8,425.6 307.0,422.3 C308.7,419.8 310.4,417.0 312.6,415.6 C313.5,415.0 315.0,417.2 316.0,416.7 C318.9,415.3 321.0,411.7 323.8,410.0 C324.2,409.8 324.7,410.7 325.0,411.1 C326.7,413.8 328.1,416.1 329.5,418.9 C331.6,423.2 332.2,427.7 335.0,431.2 C337.3,433.9 340.7,435.8 343.9,436.8 C345.7,437.3 347.5,435.8 349.5,435.7 C354.9,435.3 360.0,436.5 365.1,435.2 C369.3,434.2 372.2,430.1 376.3,429.0 C378.4,428.3 380.6,429.5 382.9,430.1 C386.1,430.9 388.6,432.7 391.9,433.0 C397.2,433.4 402.3,430.9 407.5,431.9 C410.9,432.5 413.0,436.4 416.4,437.4 C418.5,438.1 420.8,436.3 423.1,436.8 C426.3,437.4 428.7,439.9 432.0,440.6 C438.0,441.7 443.5,441.6 449.8,441.9 C456.0,442.2 461.4,442.4 467.6,442.3 C473.7,442.3 478.9,442.1 485.0,441.7 C487.9,441.5 490.5,441.2 493.4,440.6 C502.8,438.3 511.0,436.6 520.1,433.4 C525.8,431.4 530.2,428.2 535.7,425.6 C539.5,423.9 542.9,422.5 546.9,421.2 C551.1,419.8 554.8,418.1 559.1,417.8 C562.6,417.6 565.7,418.8 569.1,419.6 C572.3,420.4 574.9,421.3 578.1,422.3 C582.2,423.6 586.1,424.3 590.0,426.0 C590.7,426.3 590.6,427.6 591.4,427.9 C601.2,430.8 610.1,432.8 620.2,435.0 C630.8,437.4 640.0,438.7 650.5,441.1 C661.1,443.5 670.1,446.2 680.7,448.6 C691.3,451.0 700.3,452.9 711.0,454.7 C716.2,455.6 720.8,455.9 726.1,456.2 C734.5,456.7 741.6,457.0 750.0,457.1 C757.6,457.2 764.1,456.8 771.7,456.8 C785.8,456.9 797.8,457.3 811.9,457.5 C816.5,457.6 820.7,457.0 825.2,457.5 C826.1,457.6 826.7,459.2 827.5,459.1 C828.3,458.9 828.6,457.1 829.7,456.8 C834.1,455.8 838.4,455.8 843.1,455.3 C850.8,454.4 857.5,453.9 865.3,453.0 C873.1,452.1 879.8,451.3 887.6,450.1 C893.7,449.2 898.9,448.3 905.0,447.2 C907.9,446.7 910.5,446.3 913.4,445.7 C914.9,445.4 916.6,444.2 917.8,444.6 C918.9,444.9 919.4,448.2 920.1,447.9 C921.0,447.5 920.6,443.3 922.3,442.8 C929.2,440.6 936.7,440.7 944.6,440.1 C958.6,439.1 970.6,438.9 984.7,438.3 C994.0,438.0 1002.1,438.2 1011.4,437.4 C1019.3,436.8 1025.9,435.4 1033.7,434.5 C1042.9,433.5 1050.8,432.1 1060.0,431.9 C1064.9,431.7 1069.2,433.2 1074.1,433.4 C1080.8,433.6 1086.6,433.7 1093.2,433.0 C1100.7,432.2 1107.3,431.3 1114.3,429.0 C1119.2,427.4 1124.4,425.7 1127.2,421.8 C1131.4,416.2 1131.4,408.6 1134.4,401.8 C1136.4,397.1 1138.8,393.2 1141.6,388.9 C1143.3,386.2 1146.3,384.7 1147.3,381.7 C1150.3,372.2 1151.3,363.1 1153.0,353.1 C1155.3,340.1 1156.0,328.7 1158.8,315.8 C1160.1,309.6 1162.2,300.6 1164.5,298.6 C1165.7,297.6 1167.7,304.0 1168.8,307.2 C1171.2,314.1 1171.6,321.1 1174.5,327.3 C1175.1,328.6 1178.3,327.3 1178.8,328.7 C1182.4,339.3 1183.5,350.1 1186.0,361.7 C1188.0,370.7 1188.5,379.0 1191.7,387.5 C1193.1,391.0 1196.0,394.3 1198.9,396.1 C1200.0,396.8 1201.7,394.4 1203.2,394.6 C1205.2,394.9 1207.4,395.9 1208.9,397.5 C1212.5,401.4 1213.9,406.5 1217.5,410.4 C1219.9,413.0 1223.1,414.2 1226.1,416.1 C1228.6,417.7 1230.7,420.4 1233.3,420.4 C1236.7,420.4 1240.2,418.2 1243.3,416.1 C1246.7,413.7 1250.2,411.2 1251.9,407.5 C1254.7,401.7 1253.7,394.7 1256.2,388.9 C1257.2,386.7 1260.9,383.4 1261.9,384.6 C1264.4,387.4 1263.3,396.2 1266.2,400.4 C1267.9,402.7 1271.9,402.2 1275.0,403.2 L1275.0,500.6 Z" fill="rgba(0,255,0,0.3)" stroke="none"/>
<path d="M62.0,461.7 C62.1,461.7 62.2,461.7 62.3,461.7 C65.1,460.8 67.6,460.4 70.3,459.2 C74.1,457.3 77.0,453.5 80.8,452.9 C83.4,452.5 85.7,455.5 88.4,456.3 C90.0,456.8 91.6,456.4 93.2,456.7 C97.3,457.4 100.6,458.4 104.7,459.2 C108.0,459.8 111.0,461.0 114.2,460.5 C118.3,459.9 121.7,456.6 125.7,456.3 C129.0,456.1 131.9,458.3 135.3,459.2 C140.6,460.5 145.1,461.8 150.5,462.4 C159.0,463.4 166.4,463.3 175.0,463.6 C177.1,463.6 179.0,463.8 181.1,463.5 C189.0,462.6 195.6,461.0 203.4,460.2 C211.2,459.3 217.9,459.3 225.7,458.6 C232.0,458.1 237.4,457.8 243.5,456.8 C250.6,455.7 256.7,454.2 263.6,452.4 C268.4,451.1 272.3,449.4 277.0,447.9 C280.8,446.7 284.4,446.2 288.1,444.6 C289.9,443.8 290.9,441.8 292.6,441.2 C293.3,441.0 294.3,442.9 294.8,442.3 C297.4,439.8 299.3,435.9 301.5,432.3 C303.6,428.9 304.8,425.6 307.0,422.3 C308.7,419.8 310.4,417.0 312.6,415.6 C313.5,415.0 315.0,417.2 316.0,416.7 C318.9,415.3 321.0,411.7 323.8,410.0 C324.2,409.8 324.7,410.7 325.0,411.1 C326.7,413.8 328.1,416.1 329.5,418.9 C331.6,423.2 332.2,427.7 335.0,431.2 C337.3,433.9 340.7,435.8 343.9,436.8 C345.7,437.3 347.5,435.8 349.5,435.7 C354.9,435.3 360.0,436.5 365.1,435.2 C369.3,434.2 372.2,430.1 376.3,429.0 C378.4,428.3 380.6,429.5 382.9,430.1 C386.1,430.9 388.6,432.7 391.9,433.0 C397.2,433.4 402.3,430.9 407.5,431.9 C410.9,432.5 413.0,436.4 416.4,437.4 C418.5,438.1 420.8,436.3 423.1,436.8 C426.3,437.4 428.7,439.9 432.0,440.6 C438.0,441.7 443.5,441.6 449.8,441.9 C456.0,442.2 461.4,442.4 467.6,442.3 C473.7,442.3 478.9,442.1 485.0,441.7 C487.9,441.5 490.5,441.2 493.4,440.6 C502.8,438.3 511.0,436.6 520.1,433.4 C525.8,431.4 530.2,428.2 535.7,425.6 C539.5,423.9 542.9,422.5 546.9,421.2 C551.1,419.8 554.8,418.1 559.1,417.8 C562.6,417.6 565.7,418.8 569.1,419.6 C572.3,420.4 574.9,421.3 578.1,422.3 C582.2,423.6 586.1,424.3 590.0,426.0 C590.7,426.3 590.6,427.6 591.4,427.9 C601.2,430.8 610.1,432.8 620.2,435.0 C630.8,437.4 640.0,438.7 650.5,441.1 C661.1,443.5 670.1,446.2 680.7,448.6 C691.3,451.0 700.3,452.9 711.0,454.7 C716.2,455.6 720.8,455.9 726.1,456.2 C734.5,456.7 741.6,457.0 750.0,457.1 C757.6,457.2 764.1,456.8 771.7,456.8 C785.8,456.9 797.8,457.3 811.9,457.5 C816.5,457.6 820.7,457.0 825.2,457.5 C826.1,457.6 826.7,459.2 827.5,459.1 C828.3,458.9 828.6,457.1 829.7,456.8 C834.1,455.8 838.4,455.8 843.1,455.3 C850.8,454.4 857.5,453.9 865.3,453.0 C873.1,452.1 879.8,451.3 887.6,450.1 C893.7,449.2 898.9,448.3 905.0,447.2 C907.9,446.7 910.5,446.3 913.4,445.7 C914.9,445.4 916.6,444.2 917.8,444.6 C918.9,444.9 919.4,448.2 920.1,447.9 C921.0,447.5 920.6,443.3 922.3,442.8 C929.2,440.6 936.7,440.7 944.6,440.1 C958.6,439.1 970.6,438.9 984.7,438.3 C994.0,438.0 1002.1,438.2 1011.4,437.4 C1019.3,436.8 1025.9,435.4 1033.7,434.5 C1042.9,433.5 1050.8,432.1 1060.0,431.9 C1064.9,431.7 1069.2,433.2 1074.1,433.4 C1080.8,433.6 1086.6,433.7 1093.2,433.0 C1100.7,432.2 1107.3,431.3 1114.3,429.0 C1119.2,427.4 1124.4,425.7 1127.2,421.8 C1131.4,416.2 1131.4,408.6 1134.4,401.8 C1136.4,397.1 1138.8,393.2 1141.6,388.9 C1143.3,386.2 1146.3,384.7 1147.3,381.7 C1150.3,372.2 1151.3,363.1 1153.0,353.1 C1155.3,340.1 1156.0,328.7 1158.8,315.8 C1160.1,309.6 1162.2,300.6 1164.5,298.6 C1165.7,297.6 1167.7,304.0 1168.8,307.2 C1171.2,314.1 1171.6,321.1 1174.5,327.3 C1175.1,328.6 1178.3,327.3 1178.8,328.7 C1182.4,339.3 1183.5,350.1 1186.0,361.7 C1188.0,370.7 1188.5,379.0 1191.7,387.5 C1193.1,391.0 1196.0,394.3 1198.9,396.1 C1200.0,396.8 1201.7,394.4 1203.2,394.6 C1205.2,394.9 1207.4,395.9 1208.9,397.5 C1212.5,401.4 1213.9,406.5 1217.5,410.4 C1219.9,413.0 1223.1,414.2 1226.1,416.1 C1228.6,417.7 1230.7,420.4 1233.3,420.4 C1236.7,420.4 1240.2,418.2 1243.3,416.1 C1246.7,413.7 1250.2,411.2 1251.9,407.5 C1254.7,401.7 1253.7,394.7 1256.2,388.9 C1257.2,386.7 1260.9,383.4 1261.9,384.6 C1264.4,387.4 1263.3,396.2 1266.2,400.4 C1267.9,402.7 1271.9,402.2 1275.0,403.2" stroke="#22ee22" stroke-width="1" fill="none" stroke-linejoin="round"/>
<path d="M62.0,475.4 C62.0,475.4 62.3,475.4 62.3,475.4 C62.5,477.0 63.3,485.6 63.6,485.9 C63.8,486.2 65.2,479.5 65.5,479.2 C65.7,479.1 67.3,483.4 67.4,483.1 C68.0,481.7 69.8,468.1 70.3,467.8 C70.7,467.5 72.5,477.7 73.2,479.2 C73.3,479.7 75.8,481.5 76.0,481.1 C76.7,480.1 79.0,470.2 79.5,470.1 C79.8,469.9 81.1,478.5 81.8,479.2 C82.0,479.6 85.3,477.9 85.6,477.3 C86.5,475.5 89.0,463.4 89.4,463.6 C89.9,463.7 91.5,480.1 91.7,479.2 C92.2,477.2 93.8,444.0 94.2,443.9 C94.5,443.7 96.2,476.7 96.7,477.3 C97.0,477.8 99.0,451.1 99.3,451.5 C99.8,452.0 101.1,480.4 101.8,483.1 C102.0,483.8 104.5,474.6 105.1,474.5 C105.6,474.3 109.1,481.7 109.5,481.1 C110.4,479.8 113.6,461.7 114.2,461.7 C114.8,461.6 117.0,479.6 117.7,480.2 C118.1,480.6 121.0,467.7 121.5,467.8 C122.0,467.8 124.0,478.9 124.7,480.8 C125.2,482.1 129.2,489.3 129.5,488.8 C130.2,487.7 130.9,471.0 131.4,470.1 C131.7,469.6 134.4,479.3 134.9,479.2 C135.4,479.2 138.2,469.3 138.7,469.3 C139.2,469.3 141.4,478.9 141.9,479.2 C142.3,479.5 144.1,473.9 144.5,473.0 C144.8,472.2 146.7,468.7 147.0,468.0 C147.4,467.2 149.4,462.5 149.6,463.0 C150.2,464.6 151.7,480.1 152.5,482.1 C152.6,482.5 154.9,479.6 155.3,479.2 C155.8,478.6 157.8,475.3 158.2,475.4 C158.8,475.6 161.6,481.5 162.0,481.1 C162.7,480.5 165.0,468.6 165.4,468.7 C166.0,468.9 168.0,482.0 168.7,483.1 C168.9,483.5 171.0,479.0 171.6,478.4 C171.9,478.1 174.2,476.7 174.5,476.9 C174.7,477.1 174.8,480.5 175.0,481.1 C175.2,481.7 176.3,484.6 176.7,484.7 C177.1,484.8 179.6,482.5 180.0,482.5 C180.4,482.5 182.1,485.0 182.3,484.7 C182.9,482.7 184.7,467.0 185.2,466.9 C185.5,466.7 187.0,480.6 187.8,482.5 C188.1,483.0 191.8,482.8 192.3,482.5 C193.1,481.9 195.7,476.8 196.3,476.9 C196.9,477.0 199.4,482.9 200.1,483.6 C200.3,483.8 202.2,482.8 202.5,482.9 C202.9,483.1 204.5,485.2 204.9,485.4 C205.2,485.5 207.0,485.0 207.3,485.0 C207.7,484.9 209.4,484.5 209.7,484.5 C210.1,484.4 211.8,484.6 212.2,484.6 C212.5,484.5 214.2,484.2 214.6,484.2 C215.2,484.2 218.4,484.7 219.0,484.7 C219.4,484.7 221.2,484.3 221.6,484.3 C222.0,484.2 223.7,484.3 224.1,484.3 C224.5,484.3 226.3,484.2 226.7,484.1 C227.1,483.9 228.8,482.2 229.2,482.1 C229.6,482.1 231.4,483.4 231.8,483.5 C232.1,483.5 233.9,482.7 234.3,482.5 C234.7,482.4 236.5,481.4 236.9,481.3 C237.3,481.2 239.3,481.3 239.6,481.2 C240.1,481.0 242.0,479.5 242.4,479.3 C242.8,479.2 244.8,478.8 245.2,478.7 C245.6,478.6 247.6,478.0 248.0,478.0 C248.4,478.0 250.2,479.3 250.6,479.2 C251.0,479.1 252.8,476.8 253.2,476.8 C253.6,476.9 255.4,479.4 255.8,479.5 C256.1,479.6 258.0,478.5 258.4,478.4 C258.8,478.3 260.6,478.0 261.0,478.0 C261.4,478.0 263.2,478.0 263.6,478.0 C264.0,478.0 265.7,477.6 266.1,477.6 C266.4,477.7 268.2,478.4 268.5,478.5 C268.9,478.6 270.7,478.9 271.0,478.9 C271.4,479.0 273.1,479.6 273.5,479.6 C273.9,479.6 275.6,479.1 276.0,479.2 C276.3,479.2 278.1,479.8 278.4,479.9 C278.8,480.0 280.6,480.2 280.9,480.2 C281.3,480.1 283.0,479.7 283.4,479.7 C283.8,479.6 285.6,479.0 285.9,479.1 C286.4,479.4 288.6,482.0 289.2,482.4 C289.7,482.7 292.1,483.6 292.6,483.6 C293.0,483.5 294.9,481.9 295.3,481.8 C295.7,481.7 297.8,482.6 298.1,482.5 C298.6,482.2 300.4,479.2 300.9,478.9 C301.2,478.7 303.3,479.1 303.7,479.1 C304.2,479.1 306.2,478.6 306.7,478.5 C307.1,478.3 309.2,477.7 309.6,477.7 C310.1,477.7 312.2,477.8 312.6,478.0 C313.1,478.2 315.0,479.6 315.4,479.7 C315.8,479.8 317.8,479.4 318.2,479.5 C318.6,479.5 320.5,480.3 321.0,480.4 C321.4,480.4 323.3,480.3 323.8,480.2 C324.2,480.2 326.5,480.0 326.9,479.8 C327.4,479.5 329.5,477.0 330.0,476.9 C330.4,476.8 332.6,477.8 333.1,478.0 C333.5,478.2 335.7,479.0 336.1,479.1 C336.5,479.2 338.5,479.0 338.9,479.1 C339.4,479.2 341.3,480.5 341.7,480.5 C342.1,480.6 344.1,479.8 344.5,479.8 C344.9,479.9 346.8,481.2 347.3,481.3 C347.7,481.4 349.7,481.3 350.1,481.1 C350.5,480.9 352.4,478.9 352.9,478.8 C353.2,478.6 355.2,479.0 355.6,479.1 C356.1,479.1 358.1,479.0 358.4,479.1 C358.9,479.3 360.7,481.3 361.2,481.5 C361.6,481.6 363.6,481.1 364.0,481.2 C364.4,481.3 366.3,482.7 366.8,482.9 C367.2,483.1 369.3,483.8 369.6,483.6 C370.2,483.2 372.3,479.7 372.9,479.1 C373.2,478.8 375.1,477.7 375.5,477.4 C375.9,477.1 377.7,475.2 378.0,475.3 C378.6,475.5 381.2,479.2 381.8,479.8 C382.2,480.1 384.2,480.9 384.6,480.9 C385.0,480.8 387.2,479.5 387.4,479.1 C387.9,477.9 389.2,470.6 389.6,470.2 C389.8,470.0 391.0,474.0 391.2,474.7 C391.3,475.1 391.6,477.6 391.9,478.0 C392.1,478.3 394.1,479.0 394.5,479.1 C394.8,479.2 396.7,479.6 397.1,479.8 C397.5,480.1 399.2,481.7 399.7,482.0 C400.0,482.2 401.7,483.4 402.1,483.4 C402.4,483.4 404.1,482.1 404.5,481.9 C404.8,481.8 406.6,481.5 406.9,481.4 C407.3,481.2 409.0,480.0 409.3,480.0 C409.7,480.1 411.3,481.8 411.7,481.9 C412.0,482.0 413.8,481.4 414.1,481.3 C414.5,481.3 416.3,481.5 416.7,481.5 C417.1,481.5 418.8,481.5 419.2,481.5 C419.6,481.5 421.5,481.5 421.8,481.3 C422.2,481.1 423.9,479.0 424.3,478.9 C424.7,478.9 426.5,480.8 426.9,480.8 C427.2,480.8 429.0,479.3 429.4,479.2 C429.8,479.1 431.6,479.7 432.0,479.8 C432.3,479.8 434.2,479.9 434.6,479.8 C435.0,479.7 436.8,478.8 437.2,478.7 C437.5,478.7 439.4,478.5 439.8,478.5 C440.2,478.4 442.0,477.9 442.4,477.9 C442.8,478.0 444.6,479.2 445.0,479.2 C445.4,479.2 447.2,478.0 447.6,478.0 C448.0,478.0 449.9,479.0 450.3,479.1 C450.8,479.1 452.8,478.9 453.1,479.1 C453.6,479.3 455.4,481.3 455.9,481.5 C456.3,481.6 458.3,481.5 458.7,481.3 C459.2,481.2 461.2,479.5 461.7,479.4 C462.1,479.3 464.2,480.1 464.6,480.0 C465.1,480.0 467.1,478.6 467.6,478.4 C468.0,478.3 469.8,477.9 470.1,478.0 C470.5,478.1 472.2,479.7 472.6,479.8 C472.9,480.0 474.7,480.1 475.1,480.1 C475.5,480.0 477.2,478.5 477.6,478.6 C477.9,478.6 479.7,480.5 480.0,480.5 C480.4,480.5 482.1,478.6 482.5,478.5 C482.9,478.5 484.6,479.4 485.0,479.6 C485.4,479.7 487.6,480.1 488.1,480.2 C488.5,480.3 490.9,481.0 491.1,480.7 C491.9,479.8 493.8,473.1 494.5,472.4 C494.7,472.2 496.7,474.1 497.1,474.1 C497.5,474.2 499.3,472.9 499.7,472.9 C500.1,472.9 501.9,474.4 502.3,474.7 C502.7,474.9 504.6,475.9 505.1,476.0 C505.5,476.2 507.5,476.5 507.9,476.4 C508.3,476.3 510.2,474.7 510.6,474.6 C511.1,474.6 513.0,476.0 513.4,476.2 C514.1,476.6 517.2,478.1 517.9,478.4 C518.3,478.6 520.1,479.4 520.5,479.3 C520.9,479.3 522.7,477.9 523.1,477.8 C523.4,477.7 525.3,477.8 525.7,478.0 C526.1,478.1 527.9,479.6 528.3,479.5 C528.7,479.4 530.4,476.6 530.9,476.5 C531.2,476.4 533.1,477.8 533.5,478.0 C533.9,478.2 535.8,479.0 536.2,479.0 C536.6,478.9 538.4,477.4 538.8,477.3 C539.2,477.3 541.1,478.7 541.5,478.7 C541.9,478.7 543.8,478.0 544.2,477.9 C544.6,477.8 546.4,476.9 546.9,476.9 C547.3,476.9 549.2,477.7 549.6,477.7 C550.1,477.7 552.0,476.8 552.4,476.8 C552.8,476.7 554.8,476.8 555.2,476.8 C555.6,476.9 557.6,477.8 558.0,478.0 C558.4,478.2 559.8,479.6 560.2,479.8 C560.6,479.9 562.4,480.1 562.8,480.1 C563.2,480.2 565.0,480.8 565.4,480.9 C565.8,481.0 567.6,481.3 568.0,481.3 C568.4,481.3 570.2,481.4 570.6,481.4 C571.0,481.4 572.9,481.5 573.2,481.4 C573.6,481.3 575.5,480.4 575.8,480.2 C576.3,479.9 578.2,478.3 578.7,478.1 C579.0,477.9 581.1,478.0 581.5,478.0 C581.9,478.1 583.9,479.1 584.3,479.0 C584.8,479.0 586.7,477.8 587.2,477.7 C587.6,477.5 589.7,477.2 590.0,477.4 C590.2,477.5 590.3,479.3 590.3,479.1 C590.7,475.9 592.7,454.9 593.0,454.7 C593.3,454.5 594.3,476.7 594.5,475.9 C595.0,474.4 597.1,439.0 597.6,439.0 C598.0,439.0 599.9,473.6 600.6,475.9 C600.9,476.8 603.2,460.6 603.6,460.7 C604.1,460.9 606.2,477.3 606.6,477.4 C607.1,477.5 609.3,462.1 609.7,462.2 C610.1,462.4 611.6,479.8 611.8,478.9 C612.2,476.9 613.3,442.7 613.6,442.6 C613.9,442.5 615.3,477.4 615.7,477.4 C616.1,477.4 618.0,447.7 618.7,442.6 C618.8,442.1 620.8,440.6 620.9,440.2 C621.4,431.8 622.4,382.8 622.7,383.6 C623.0,384.6 624.1,441.6 624.8,451.7 C624.9,452.7 627.4,457.7 627.8,457.7 C628.3,457.7 630.5,451.5 630.8,451.7 C631.3,451.9 633.1,461.4 633.3,460.7 C633.7,459.1 635.1,440.2 635.4,436.5 C635.8,431.1 637.8,405.7 638.4,400.2 C638.7,397.7 641.0,383.6 641.4,383.6 C641.8,383.6 643.6,397.7 643.8,400.2 C644.3,405.2 645.5,429.4 646.0,433.5 C646.0,433.9 647.4,431.0 647.5,430.5 C648.0,424.9 649.5,393.8 649.9,392.7 C650.2,391.9 651.8,414.5 652.0,418.4 C652.3,424.5 653.1,457.3 653.5,459.2 C653.7,460.2 655.7,439.5 656.5,438.1 C656.9,437.5 660.7,444.4 661.1,445.6 C661.8,448.2 663.7,464.4 664.1,463.8 C664.7,462.8 666.5,437.3 667.1,435.0 C667.3,434.3 668.9,444.0 669.2,444.1 C669.6,444.2 671.3,436.4 671.7,436.5 C672.1,436.8 674.1,446.5 674.7,447.1 C675.0,447.4 677.3,443.6 677.7,442.9 C678.2,442.2 680.5,437.7 680.7,438.1 C681.4,438.8 683.4,450.4 683.8,450.2 C684.3,449.9 686.6,433.9 686.8,435.0 C687.4,438.2 688.4,472.4 689.2,478.9 C689.3,479.9 692.2,484.7 692.8,484.9 C693.2,485.1 695.5,482.5 695.9,481.9 C696.5,480.9 698.7,475.6 698.9,474.3 C699.7,468.5 701.5,439.6 702.5,435.0 C702.7,434.3 705.8,438.9 706.4,439.6 C707.0,440.1 710.1,441.9 710.4,442.6 C711.2,444.6 713.1,458.5 713.4,457.7 C714.0,456.2 715.8,429.0 716.4,427.5 C716.8,426.7 719.8,440.3 720.1,442.6 C720.7,448.7 721.6,477.6 722.5,483.4 C722.6,484.0 726.0,485.4 726.1,484.9 C727.0,481.8 728.4,463.0 729.1,459.2 C729.6,456.7 733.3,441.6 733.7,442.6 C734.5,445.0 735.7,476.4 736.7,481.9 C736.8,482.6 740.8,482.9 741.2,483.4 C742.1,484.3 745.5,491.7 745.8,491.0 C746.7,488.6 748.9,466.7 749.5,462.4 C749.5,462.1 750.0,460.5 750.0,460.7 C750.3,463.9 751.3,483.0 751.7,484.7 C751.8,485.3 753.3,475.4 753.5,475.8 C753.8,476.4 754.4,490.5 755.0,491.4 C755.3,491.8 759.1,485.8 759.5,484.7 C760.2,482.6 762.4,469.8 762.8,470.2 C763.3,470.7 764.8,488.6 765.5,490.3 C765.8,490.8 769.1,485.6 769.5,484.7 C770.3,482.9 773.0,472.3 773.5,472.4 C774.0,472.5 775.9,486.5 776.2,485.8 C776.9,484.3 779.5,458.6 780.0,457.9 C780.3,457.5 781.3,477.0 781.8,478.0 C782.0,478.5 784.3,467.6 784.7,468.0 C785.3,468.5 787.5,481.6 788.5,483.6 C788.7,484.1 792.5,485.0 792.9,484.7 C793.4,484.3 794.2,479.0 794.5,479.1 C794.8,479.3 796.5,487.5 796.7,486.9 C797.3,485.2 799.7,464.3 800.3,463.5 C800.6,463.0 802.4,477.2 802.9,478.0 C803.2,478.4 804.9,470.9 805.2,471.3 C805.7,472.1 807.2,484.3 807.8,485.8 C808.0,486.2 810.7,484.1 810.7,483.6 C811.5,478.2 813.2,446.6 813.6,446.8 C814.1,447.0 815.4,480.7 816.3,485.8 C816.4,486.4 820.4,485.2 820.8,484.7 C821.6,483.4 823.7,473.3 824.1,473.5 C824.6,473.8 825.6,486.7 826.3,488.0 C826.6,488.5 830.3,486.3 830.8,485.8 C831.5,485.1 833.8,480.1 834.1,480.2 C834.5,480.3 835.7,487.1 835.9,486.9 C836.2,486.6 837.2,476.9 837.5,476.9 C837.8,476.9 839.2,486.5 839.7,486.9 C840.0,487.2 842.4,481.8 843.1,481.3 C843.3,481.1 845.5,482.5 845.8,482.8 C846.3,483.2 848.1,485.6 848.6,485.8 C849.0,485.9 851.0,484.8 851.4,484.6 C851.8,484.4 853.8,483.6 854.2,483.6 C854.9,483.6 858.4,485.2 858.6,484.7 C859.5,483.0 861.2,471.5 861.7,469.2 C862.1,467.0 864.4,453.8 864.7,454.6 C865.3,456.4 866.9,482.1 867.6,486.9 C867.8,488.6 870.5,498.3 870.9,498.1 C871.4,497.8 872.4,484.9 873.1,483.6 C873.4,483.1 877.3,486.2 877.6,485.8 C878.4,484.6 880.5,472.4 880.9,472.4 C881.3,472.4 882.7,485.3 883.2,485.8 C883.4,486.1 885.0,478.0 885.4,478.0 C885.8,478.0 888.1,484.9 888.7,485.8 C888.9,486.1 891.0,486.0 891.3,485.9 C891.7,485.8 893.5,484.8 893.9,484.7 C894.3,484.7 896.2,485.6 896.5,485.8 C897.0,486.0 898.9,487.4 899.4,487.5 C899.7,487.6 901.8,487.6 902.2,487.6 C902.6,487.5 904.6,486.9 905.0,486.9 C905.4,486.9 907.4,487.4 907.8,487.3 C908.2,487.2 910.1,485.5 910.6,485.5 C911.0,485.4 913.0,487.1 913.4,486.9 C914.0,486.6 916.1,482.9 916.7,482.5 C917.0,482.2 919.1,482.2 919.5,482.3 C919.9,482.4 921.8,483.5 922.3,483.6 C922.6,483.6 924.4,483.3 924.8,483.3 C925.1,483.4 926.9,484.5 927.2,484.5 C927.6,484.4 929.3,482.3 929.7,482.1 C930.0,482.0 931.9,482.2 932.2,482.4 C932.6,482.6 934.3,485.1 934.7,485.1 C935.0,485.1 936.7,482.4 937.1,482.2 C937.4,482.1 939.2,482.9 939.6,483.0 C940.0,483.0 941.7,483.0 942.1,483.1 C942.5,483.1 944.2,483.5 944.6,483.6 C944.9,483.6 946.7,483.9 947.0,483.8 C947.4,483.8 949.1,482.7 949.5,482.6 C949.9,482.5 951.7,482.2 952.0,482.4 C952.4,482.5 954.1,484.3 954.5,484.3 C954.8,484.2 956.5,482.3 956.9,482.2 C957.3,482.1 959.1,483.0 959.4,483.2 C959.8,483.3 961.5,484.4 961.9,484.5 C962.2,484.6 964.0,484.6 964.4,484.5 C964.8,484.5 966.5,483.7 966.9,483.6 C967.3,483.4 969.4,482.9 969.8,482.8 C970.3,482.7 972.4,482.6 972.8,482.5 C973.2,482.5 975.3,482.1 975.8,482.0 C976.2,482.0 978.0,481.9 978.4,481.9 C978.8,481.9 980.7,482.2 981.1,482.2 C981.5,482.3 983.4,482.7 983.8,482.7 C984.2,482.6 986.1,481.3 986.5,481.3 C986.9,481.4 988.7,482.8 989.1,482.9 C989.5,483.0 991.3,482.6 991.6,482.7 C992.0,482.9 993.7,484.3 994.1,484.4 C994.4,484.6 996.2,484.5 996.6,484.4 C997.0,484.2 998.6,482.6 999.0,482.4 C999.4,482.3 1001.2,482.0 1001.5,482.1 C1001.9,482.2 1003.6,483.7 1004.0,483.9 C1004.3,484.0 1006.1,484.3 1006.5,484.4 C1006.8,484.4 1008.6,484.3 1008.9,484.2 C1009.3,484.2 1011.1,483.7 1011.4,483.6 C1011.9,483.4 1013.7,481.9 1014.1,481.7 C1014.5,481.5 1016.4,480.8 1016.8,480.8 C1017.2,480.9 1019.1,482.8 1019.4,482.7 C1019.9,482.6 1021.7,480.1 1022.1,479.9 C1022.5,479.8 1024.4,480.5 1024.8,480.7 C1025.2,480.8 1027.1,482.0 1027.4,481.9 C1027.8,481.8 1029.5,479.4 1030.0,479.1 C1030.3,479.0 1032.2,479.3 1032.6,479.5 C1033.0,479.6 1034.8,481.0 1035.2,481.2 C1035.6,481.4 1037.4,482.2 1037.8,482.1 C1038.2,482.1 1040.0,480.6 1040.4,480.7 C1040.8,480.8 1042.6,483.0 1043.0,483.3 C1043.3,483.6 1045.2,484.7 1045.6,484.9 C1046.0,485.1 1047.8,485.7 1048.2,485.8 C1048.6,485.9 1050.6,485.8 1051.0,485.7 C1051.4,485.6 1053.3,484.3 1053.8,484.2 C1053.9,484.2 1054.8,484.9 1055.0,485.0 C1055.1,485.0 1055.9,484.8 1056.0,484.7 C1056.3,484.4 1057.8,482.6 1057.9,482.1 C1058.5,477.2 1060.2,451.4 1060.7,448.7 C1060.9,447.9 1062.5,456.8 1062.6,458.2 C1063.2,462.6 1065.0,487.2 1065.5,487.8 C1065.9,488.3 1068.1,469.2 1068.4,465.9 C1068.9,460.0 1070.1,430.1 1070.7,426.7 C1070.8,425.8 1073.0,435.6 1073.2,437.2 C1073.8,446.0 1075.0,492.2 1075.6,496.4 C1075.9,497.9 1078.4,475.6 1078.9,475.4 C1079.3,475.3 1081.3,493.6 1081.8,494.5 C1082.0,495.0 1083.2,486.4 1083.7,485.0 C1084.1,483.6 1087.2,475.8 1087.5,476.4 C1088.2,477.7 1089.9,497.2 1090.4,497.4 C1090.7,497.6 1092.9,482.0 1093.2,479.2 C1093.7,475.8 1095.3,456.5 1095.7,456.3 C1096.0,456.2 1097.5,474.2 1098.0,477.3 C1098.3,479.6 1100.4,492.5 1100.9,492.6 C1101.3,492.7 1103.0,480.3 1103.7,479.2 C1104.0,478.8 1107.2,482.3 1107.5,483.1 C1108.3,484.5 1110.5,494.0 1110.8,493.6 C1111.3,492.9 1112.9,478.1 1113.3,475.4 C1113.7,471.7 1115.8,450.4 1116.1,450.6 C1116.5,450.7 1117.6,473.3 1118.1,477.3 C1118.3,479.9 1120.6,495.0 1120.9,494.5 C1121.4,493.8 1122.4,470.7 1122.8,468.7 C1123.0,468.1 1124.5,477.3 1124.7,477.3 C1125.0,477.3 1126.4,468.4 1126.7,468.7 C1127.1,469.3 1129.2,480.9 1129.5,483.1 C1129.9,485.6 1131.1,500.6 1131.4,500.3 C1131.8,499.8 1133.8,478.0 1134.3,477.3 C1134.6,476.9 1136.8,493.5 1137.2,492.6 C1138.0,490.6 1141.3,459.2 1141.9,458.2 C1142.4,457.5 1144.2,480.3 1144.8,481.1 C1145.2,481.7 1148.1,467.8 1148.6,467.8 C1149.1,467.8 1151.0,480.8 1151.5,481.1 C1151.9,481.4 1153.7,472.9 1154.4,471.6 C1154.7,470.8 1157.8,466.5 1158.2,466.8 C1158.8,467.4 1160.7,477.5 1161.1,477.3 C1161.5,477.2 1163.6,464.8 1163.9,464.9 C1164.2,465.1 1164.6,477.7 1165.0,479.2 C1165.1,479.5 1166.7,477.7 1166.8,477.3 C1167.1,475.8 1167.6,468.4 1167.9,466.8 C1167.9,466.6 1168.7,465.7 1168.7,465.9 C1169.1,467.4 1170.1,477.5 1170.7,478.3 C1171.0,478.7 1174.0,473.5 1174.6,473.5 C1175.0,473.5 1176.9,478.1 1177.4,478.3 C1177.8,478.4 1179.8,475.7 1180.3,475.4 C1180.9,475.1 1184.7,474.0 1185.1,474.5 C1186.0,475.5 1188.4,483.4 1188.9,485.0 C1189.4,486.9 1191.5,499.1 1191.8,498.3 C1192.3,496.9 1194.0,474.6 1194.6,470.6 C1194.7,470.3 1196.4,469.4 1196.5,469.7 C1197.0,471.0 1198.1,480.9 1198.4,481.1 C1198.7,481.3 1200.1,472.1 1200.4,472.5 C1200.7,473.3 1201.7,487.7 1202.3,488.8 C1202.5,489.2 1205.1,484.0 1205.1,483.1 C1205.7,465.8 1206.2,376.8 1206.6,367.4 C1206.8,364.6 1208.5,396.6 1208.9,401.8 C1209.3,406.5 1211.3,432.6 1211.8,433.3 C1212.1,433.9 1213.8,413.8 1214.1,410.4 C1214.5,405.2 1216.4,377.0 1216.9,376.0 C1217.3,375.3 1219.2,395.5 1219.8,398.9 C1220.2,401.1 1222.7,412.9 1223.2,413.2 C1223.6,413.5 1225.5,404.2 1226.1,403.2 C1226.3,402.9 1228.5,404.6 1229.0,404.7 C1229.4,404.8 1231.4,404.7 1231.8,404.6 C1232.3,404.6 1234.3,403.9 1234.7,404.0 C1235.2,404.1 1237.1,405.8 1237.6,406.1 C1238.0,406.3 1240.0,406.9 1240.4,407.0 C1240.9,407.1 1242.9,407.4 1243.3,407.5 C1243.7,407.6 1245.8,407.9 1246.2,408.1 C1246.7,408.4 1248.6,410.4 1249.0,410.4 C1249.5,410.3 1251.4,407.8 1251.9,407.4 C1252.3,407.2 1254.3,406.2 1254.8,406.1 C1255.2,406.0 1257.3,406.1 1257.6,405.9 C1258.1,405.7 1260.0,404.0 1260.5,403.7 C1260.9,403.6 1263.0,403.1 1263.4,403.2 C1263.8,403.3 1265.8,404.6 1266.2,404.9 C1266.7,405.2 1268.7,407.5 1269.1,407.5 C1269.5,407.6 1271.6,405.6 1272.1,405.5 C1272.5,405.4 1274.6,406.0 1275.0,406.1" stroke="rgba(0,0,0,0.78)" stroke-width="1.9" fill="none" stroke-linejoin="round"/>
<path d="M62.0,500.6 L62.0,506.9 C62.1,506.9 62.2,506.9 62.3,506.9 C62.6,509.0 63.0,515.3 63.6,515.5 C64.1,515.8 65.4,510.2 66.5,508.9 C67.1,508.1 69.3,507.4 70.3,506.9 C71.2,506.5 73.5,505.8 74.1,505.0 C75.6,503.2 78.2,496.3 78.9,496.4 C79.6,496.6 79.0,504.7 79.8,506.0 C80.2,506.6 83.0,503.6 83.7,504.1 C84.9,505.0 87.0,512.6 87.5,511.7 C88.5,509.9 88.7,495.2 89.4,493.6 C89.7,492.8 91.5,503.5 91.7,502.2 C92.6,496.6 93.7,465.9 94.2,465.9 C94.6,465.9 94.8,493.8 95.5,502.2 C95.5,502.6 97.0,501.6 97.0,501.1 C97.9,495.1 98.8,476.0 99.3,476.4 C100.0,476.8 100.7,499.9 101.8,504.1 C102.1,505.2 104.5,497.0 105.1,497.4 C105.9,498.0 106.4,506.8 107.5,507.9 C108.2,508.5 111.9,505.5 112.3,504.1 C113.7,499.7 114.1,484.5 114.6,485.0 C115.3,485.5 115.7,504.6 117.1,507.9 C117.5,508.9 120.5,502.8 121.9,502.2 C122.7,501.8 124.9,504.1 125.7,504.1 C126.2,504.0 127.1,501.3 127.2,501.8 C128.0,504.2 128.9,515.5 129.5,515.5 C130.1,515.5 131.0,504.2 131.8,501.8 C132.0,501.3 132.8,504.0 133.3,504.1 C134.2,504.1 136.3,502.0 137.2,502.2 C138.2,502.4 140.0,505.9 141.0,506.0 C141.9,506.1 144.1,502.8 144.8,503.1 C146.0,503.7 148.2,510.7 148.6,509.8 C149.7,507.6 149.9,491.0 150.5,490.7 C151.1,490.5 152.0,505.2 153.4,507.9 C153.9,508.8 156.9,505.3 158.2,505.0 C159.1,504.8 161.7,506.7 162.0,506.0 C163.4,502.7 164.2,488.8 164.9,488.8 C165.6,488.8 166.3,505.1 167.7,506.0 C168.8,506.6 173.5,494.9 174.9,494.7 C176.0,494.6 176.7,503.3 177.8,504.7 C178.2,505.3 180.5,503.3 181.1,502.5 C182.4,501.0 184.5,495.3 185.2,495.8 C186.2,496.7 186.7,507.0 187.8,508.1 C188.5,508.7 191.2,503.9 192.3,502.5 C193.1,501.4 195.2,497.5 195.6,498.1 C196.6,499.2 197.0,508.5 197.9,509.2 C198.4,509.7 200.0,504.1 201.2,502.9 C202.0,502.1 204.5,501.2 205.7,501.0 C206.7,500.8 209.0,501.2 210.1,501.3 C211.2,501.4 213.4,501.8 214.6,501.9 C215.4,502.0 217.1,501.9 217.9,501.9 C218.7,501.9 220.4,501.8 221.3,501.7 C222.1,501.5 223.7,500.9 224.6,500.8 C225.4,500.8 227.1,501.0 227.9,501.0 C229.1,501.1 231.3,501.0 232.4,501.2 C233.5,501.3 235.7,502.2 236.9,502.3 C237.8,502.3 239.6,501.5 240.6,501.4 C241.5,501.4 243.4,501.9 244.3,501.9 C245.2,501.9 247.1,501.5 248.0,501.4 C248.9,501.3 250.8,501.0 251.7,501.1 C252.7,501.2 254.5,502.2 255.4,502.3 C256.3,502.4 258.2,501.9 259.1,501.9 C260.1,501.8 261.9,501.9 262.9,501.9 C263.8,501.9 265.7,502.1 266.6,502.0 C267.5,501.9 269.4,501.1 270.3,501.0 C271.1,501.0 272.6,501.9 273.4,501.9 C274.2,501.9 275.7,501.1 276.5,501.1 C277.3,501.1 278.8,501.7 279.6,501.8 C280.4,501.9 282.0,501.7 282.8,501.8 C283.5,501.9 285.1,502.2 285.9,502.3 C286.8,502.4 288.5,502.7 289.4,502.7 C290.3,502.8 292.1,502.7 293.0,502.6 C293.9,502.5 295.7,502.0 296.6,502.1 C297.5,502.2 299.2,503.1 300.1,503.2 C301.0,503.3 302.8,503.0 303.7,502.9 C304.6,502.8 306.5,502.5 307.4,502.4 C308.3,502.3 310.2,502.2 311.1,502.1 C312.1,502.0 313.9,501.7 314.8,501.6 C315.8,501.6 317.6,502.2 318.5,502.1 C319.4,502.0 321.2,501.1 322.2,501.0 C323.0,500.9 324.9,501.3 325.8,501.3 C326.7,501.3 328.6,500.7 329.5,500.7 C329.6,500.7 329.9,501.1 330.0,501.0 C331.0,500.7 332.9,499.2 333.9,499.2 C335.0,499.1 337.2,500.4 338.4,500.7 C339.5,501.0 341.7,501.2 342.8,501.4 C343.6,501.5 345.2,502.0 345.9,502.0 C346.7,502.1 348.3,501.6 349.1,501.4 C349.8,501.3 351.4,501.0 352.2,500.9 C353.0,500.8 354.5,500.7 355.3,500.7 C356.1,500.7 357.7,500.9 358.4,501.0 C359.4,501.2 361.2,502.0 362.1,502.2 C363.1,502.5 364.9,502.8 365.9,502.9 C366.8,503.0 368.6,502.9 369.6,502.9 C371.2,502.9 375.2,503.7 376.3,502.9 C377.3,502.0 377.4,496.5 378.0,496.3 C378.5,496.1 379.7,500.5 380.7,501.0 C382.0,501.7 385.7,501.1 387.4,501.0 C387.7,501.0 388.4,500.9 388.5,500.7 C389.0,498.5 389.2,491.3 389.6,491.4 C390.1,491.4 390.7,499.2 391.9,501.0 C392.4,501.9 395.2,502.1 396.3,502.3 C397.4,502.5 399.7,502.6 400.8,502.6 C401.6,502.6 403.3,502.5 404.1,502.5 C404.9,502.5 406.6,502.8 407.5,502.7 C408.3,502.6 409.9,501.9 410.8,501.7 C411.6,501.5 413.3,501.1 414.1,501.0 C415.1,501.0 417.0,500.9 417.9,501.1 C418.8,501.3 420.6,502.3 421.6,502.5 C422.5,502.6 424.4,502.4 425.3,502.3 C426.4,502.1 428.7,501.9 429.7,501.6 C430.9,501.3 433.1,499.8 434.2,499.8 C435.8,499.9 439.2,501.7 440.9,501.9 C442.0,502.0 444.2,501.5 445.3,501.4 C446.5,501.2 448.7,500.8 449.8,500.7 C450.6,500.6 452.3,500.4 453.1,500.4 C454.0,500.4 455.6,500.7 456.5,500.7 C457.3,500.8 459.0,501.0 459.8,501.1 C460.7,501.2 462.3,501.6 463.2,501.6 C463.9,501.7 465.5,501.2 466.3,501.2 C467.1,501.2 468.6,501.8 469.4,501.8 C470.2,501.8 471.7,501.1 472.5,501.1 C473.3,501.2 474.9,501.8 475.6,501.9 C476.4,502.1 478.0,502.3 478.8,502.3 C479.6,502.2 481.1,501.4 481.9,501.3 C482.6,501.2 484.2,501.3 485.0,501.4 C486.5,501.6 489.6,502.1 491.1,502.3 C491.9,502.3 493.5,502.3 494.3,502.3 C495.1,502.4 496.7,502.9 497.5,502.8 C498.3,502.7 499.9,501.8 500.7,501.6 C501.5,501.5 503.1,501.7 503.9,501.7 C504.7,501.8 506.3,502.1 507.1,502.1 C507.9,502.0 509.4,501.3 510.2,501.2 C511.0,501.2 512.6,501.6 513.4,501.6 C514.2,501.7 515.8,501.6 516.6,501.7 C517.4,501.9 519.0,502.6 519.8,502.6 C520.6,502.7 522.2,502.1 523.0,502.0 C523.8,502.0 525.4,502.0 526.2,502.1 C527.0,502.1 528.5,502.6 529.3,502.7 C530.1,502.8 531.7,502.8 532.5,502.7 C533.3,502.6 534.9,502.0 535.7,501.9 C536.5,501.8 538.1,501.9 538.9,501.8 C539.7,501.8 541.3,501.5 542.1,501.5 C542.9,501.4 544.5,501.1 545.3,501.1 C546.1,501.1 547.6,501.2 548.4,501.3 C549.2,501.3 550.8,501.4 551.6,501.3 C552.4,501.3 554.0,500.8 554.8,500.8 C555.6,500.8 557.2,501.4 558.0,501.4 C558.8,501.4 560.4,501.1 561.2,501.0 C562.0,501.0 563.6,501.1 564.4,501.2 C565.2,501.2 566.7,501.7 567.5,501.7 C568.3,501.7 569.9,501.4 570.7,501.3 C571.5,501.3 573.1,501.3 573.9,501.4 C574.7,501.6 576.3,502.5 577.1,502.5 C577.9,502.5 579.5,501.8 580.3,501.6 C581.1,501.5 582.7,501.5 583.5,501.3 C584.4,501.1 585.9,500.2 586.8,500.0 C587.5,499.9 589.3,499.8 590.0,500.1 C590.4,500.2 591.0,501.3 591.4,501.4 C591.9,501.5 593.4,501.0 593.5,500.5 C594.7,490.9 596.0,460.7 596.7,460.7 C597.3,460.8 598.0,490.9 598.5,501.0 C598.6,503.0 598.7,507.3 599.1,509.1 C599.1,509.3 600.0,509.5 600.0,509.3 C600.8,505.7 601.9,494.4 602.5,494.0 C603.1,493.7 603.8,506.8 604.5,506.8 C605.1,506.7 607.0,493.5 607.6,493.4 C608.2,493.2 608.7,504.4 609.6,505.5 C610.0,506.0 612.0,499.8 612.7,499.7 C613.3,499.7 614.0,504.4 614.6,504.8 C615.0,505.1 616.1,502.2 616.6,502.3 C617.2,502.5 618.4,506.0 619.1,506.1 C619.7,506.2 621.2,503.8 621.7,502.9 C622.7,500.8 624.5,492.9 624.8,494.0 C625.6,496.8 625.8,512.2 626.1,518.2 C626.5,525.2 627.3,546.8 627.8,546.2 C628.3,545.6 629.1,521.4 629.9,513.1 C630.4,508.6 632.3,496.5 633.1,495.3 C633.6,494.6 634.5,502.9 635.0,505.5 C635.3,506.8 636.1,511.4 636.3,510.6 C636.9,507.5 637.6,491.6 638.2,490.2 C638.6,489.4 639.3,500.1 640.1,501.7 C640.4,502.2 642.0,498.7 642.7,498.5 C643.1,498.3 644.4,499.7 644.6,500.4 C645.4,503.4 646.0,513.0 646.5,513.1 C646.9,513.3 647.7,502.5 648.4,501.7 C648.8,501.2 650.7,506.3 651.0,508.0 C651.9,513.4 652.8,529.5 653.2,529.7 C653.7,529.8 653.9,514.2 654.8,509.3 C654.9,508.4 656.8,507.5 657.3,506.8 C658.0,505.9 659.6,504.0 659.9,502.9 C660.9,498.6 661.8,489.6 662.4,485.1 C662.9,481.9 664.1,471.2 664.3,472.4 C664.9,475.0 664.6,493.8 665.6,500.4 C665.7,501.3 668.3,501.6 668.8,502.3 C669.7,503.8 671.0,507.5 671.3,509.3 C672.2,513.4 673.2,525.9 673.6,525.9 C674.1,525.9 674.4,513.3 675.2,509.3 C675.4,507.9 676.9,504.9 677.7,504.2 C678.1,503.9 679.7,504.9 680.0,505.5 C681.0,507.2 682.5,513.1 683.2,513.1 C683.8,513.1 684.5,506.1 685.1,505.5 C685.4,505.1 686.6,509.5 687.0,509.3 C687.7,509.0 688.8,504.2 689.6,503.6 C689.9,503.3 691.1,504.9 691.5,505.5 C692.1,506.5 692.9,510.1 693.4,509.9 C694.0,509.7 695.0,504.6 695.9,503.6 C696.3,503.2 698.2,504.6 698.5,504.2 C699.3,502.9 699.9,496.6 700.4,496.6 C700.9,496.6 701.5,503.2 702.3,504.2 C702.6,504.6 704.4,502.9 704.8,502.3 C705.6,501.3 706.8,497.8 707.4,497.8 C708.0,497.9 708.6,501.8 709.3,502.9 C709.7,503.7 711.6,504.7 711.8,505.5 C712.7,507.8 713.3,515.8 713.8,515.7 C714.3,515.5 714.8,506.3 715.7,504.2 C715.9,503.7 717.9,504.9 718.2,505.5 C719.2,507.1 720.3,513.4 720.8,513.1 C721.4,512.8 721.7,505.1 722.7,502.9 C723.0,502.2 725.6,501.1 725.9,501.7 C726.8,503.6 727.2,512.8 727.8,513.1 C728.2,513.4 729.5,503.1 729.7,504.2 C730.3,507.4 730.7,531.0 731.0,530.3 C731.3,529.4 731.8,498.3 732.2,497.8 C732.6,497.4 734.0,526.0 734.5,526.5 C735.0,526.9 734.9,506.7 736.1,501.7 C736.2,500.8 738.9,502.6 739.9,502.9 C740.8,503.2 742.9,504.5 743.7,504.2 C744.8,503.8 747.2,501.6 747.5,500.4 C748.6,496.2 749.0,482.0 749.4,482.5 C750.0,483.3 750.3,499.9 751.3,505.5 C751.6,506.8 753.8,509.7 754.5,509.9 C755.0,510.1 755.9,507.5 756.4,506.8 C757.4,505.4 759.4,502.6 760.6,501.4 C760.9,501.1 762.2,500.5 762.3,500.9 C763.2,503.6 763.9,513.4 764.6,513.6 C765.2,513.8 765.8,504.4 767.3,502.5 C768.2,501.4 772.3,501.7 774.0,501.4 C774.8,501.3 777.1,501.6 777.2,500.9 C778.5,494.7 779.0,473.3 779.5,473.5 C780.1,473.7 781.0,495.3 781.8,502.5 C782.4,508.4 784.4,525.6 785.1,525.9 C785.8,526.2 785.7,508.3 787.3,504.7 C787.9,503.6 792.6,507.2 794.0,507.0 C795.2,506.8 797.7,504.2 798.0,502.8 C799.2,497.5 799.7,480.3 800.3,480.2 C800.8,480.2 801.7,500.1 802.5,502.5 C802.8,503.5 804.1,493.6 804.7,493.6 C805.3,493.6 806.3,500.5 807.4,502.5 C808.1,503.9 811.6,508.1 811.9,507.0 C813.2,501.4 813.1,476.1 813.6,475.8 C814.2,475.5 814.4,499.4 816.3,504.7 C816.8,506.0 821.3,502.5 823.0,502.5 C824.7,502.5 828.0,504.3 829.7,504.7 C830.5,505.0 832.2,505.0 833.0,505.2 C833.9,505.4 835.5,506.3 836.4,506.4 C837.2,506.5 838.9,506.0 839.7,506.1 C840.6,506.2 842.3,507.2 843.1,507.0 C844.8,506.3 848.0,502.8 849.7,502.5 C851.3,502.2 854.8,504.8 856.4,504.7 C857.9,504.7 861.8,503.4 862.4,502.0 C863.9,498.4 864.0,484.6 864.7,484.7 C865.3,484.7 866.6,498.1 867.6,502.5 C868.2,505.3 869.9,513.0 870.9,513.6 C871.6,514.1 873.2,508.5 874.2,507.0 C875.1,505.8 878.2,504.2 878.6,502.8 C879.9,498.6 880.4,484.7 880.9,484.7 C881.5,484.6 881.9,498.4 883.2,502.5 C883.6,504.0 886.4,506.6 887.6,507.0 C888.6,507.2 891.0,505.4 892.1,504.8 C893.2,504.3 895.4,502.9 896.5,502.5 C897.5,502.2 899.7,502.2 900.8,502.0 C901.8,501.9 903.9,501.5 905.0,501.4 C906.0,501.3 908.0,500.9 908.9,501.0 C910.1,501.2 912.2,502.4 913.4,502.7 C914.5,503.0 916.7,503.6 917.8,503.5 C919.0,503.4 921.1,501.8 922.3,501.6 C923.1,501.5 924.8,502.3 925.6,502.3 C926.5,502.2 928.1,501.3 929.0,501.2 C929.8,501.0 931.5,501.0 932.3,501.0 C933.1,501.0 934.8,501.0 935.7,501.0 C936.5,501.1 938.3,501.3 939.2,501.2 C940.1,501.2 941.9,500.6 942.8,500.6 C943.7,500.6 945.4,501.3 946.4,501.4 C947.2,501.5 949.0,501.4 949.9,501.2 C950.8,501.1 952.6,500.3 953.5,500.3 C954.3,500.3 956.0,501.3 956.8,501.3 C957.6,501.3 959.3,500.7 960.2,500.7 C961.0,500.6 962.7,500.8 963.5,500.9 C964.3,501.0 966.0,501.4 966.9,501.4 C967.8,501.4 969.6,501.0 970.6,501.0 C971.5,501.1 973.3,501.6 974.3,501.7 C975.2,501.8 977.1,501.8 978.0,501.9 C978.8,502.0 980.3,502.5 981.1,502.5 C981.9,502.6 983.5,502.6 984.2,502.6 C985.0,502.5 986.6,502.4 987.4,502.2 C988.2,501.9 989.7,501.1 990.5,500.9 C991.2,500.8 992.8,501.0 993.6,501.0 C994.5,501.0 996.4,500.8 997.3,501.0 C998.3,501.1 1000.1,502.0 1001.0,502.1 C1001.9,502.3 1003.8,501.9 1004.7,501.9 C1005.7,501.9 1007.5,502.1 1008.4,502.0 C1009.4,502.0 1011.2,501.6 1012.2,501.4 C1013.1,501.1 1014.9,500.4 1015.9,500.3 C1016.7,500.2 1018.4,500.1 1019.2,500.2 C1020.1,500.4 1021.7,501.5 1022.6,501.7 C1023.4,501.9 1025.1,501.7 1025.9,501.7 C1026.7,501.6 1028.4,501.4 1029.2,501.4 C1030.1,501.4 1031.8,501.4 1032.6,501.4 C1033.4,501.4 1035.1,501.6 1035.9,501.7 C1036.8,501.9 1038.4,502.6 1039.3,502.6 C1040.1,502.6 1041.8,502.0 1042.6,501.9 C1043.5,501.8 1045.4,501.9 1046.3,501.8 C1047.3,501.8 1049.1,501.8 1050.0,501.7 C1051.0,501.6 1052.8,501.1 1053.8,501.0 C1054.1,501.0 1054.7,501.3 1055.0,501.2 C1056.2,500.7 1058.6,498.6 1059.8,498.3 C1060.4,498.2 1062.1,499.1 1062.3,499.8 C1063.3,503.9 1063.8,516.8 1064.6,517.5 C1065.1,517.9 1066.3,507.2 1067.4,504.1 C1067.9,502.7 1070.2,500.0 1071.2,499.3 C1071.6,499.0 1073.2,499.6 1073.3,500.1 C1074.3,505.8 1075.0,523.6 1075.6,524.1 C1076.2,524.6 1077.1,505.4 1077.9,504.1 C1078.4,503.3 1080.0,515.3 1080.8,515.5 C1081.5,515.8 1083.0,506.3 1083.7,506.0 C1084.2,505.8 1084.9,513.4 1085.6,513.6 C1086.1,513.8 1088.1,507.2 1088.4,507.9 C1089.3,509.8 1089.8,524.6 1090.4,524.1 C1091.0,523.6 1092.6,509.1 1093.2,504.1 C1094.0,497.4 1095.1,477.3 1095.7,477.3 C1096.3,477.3 1097.1,497.5 1098.0,504.1 C1098.3,506.5 1100.3,514.0 1100.9,513.6 C1101.6,513.2 1102.3,503.7 1103.2,501.1 C1103.3,500.8 1104.3,501.9 1104.7,502.2 C1105.6,502.7 1108.2,503.1 1108.5,504.1 C1109.7,507.4 1110.2,519.4 1110.8,519.4 C1111.4,519.4 1112.9,507.9 1113.3,504.1 C1114.1,496.0 1115.2,471.1 1115.8,471.6 C1116.4,472.1 1117.0,498.9 1118.1,507.9 C1118.3,510.4 1120.3,517.7 1120.9,517.5 C1121.7,517.2 1123.3,508.9 1123.8,506.0 C1124.6,501.5 1125.5,487.6 1126.1,487.8 C1126.7,488.1 1127.9,502.9 1128.6,507.9 C1129.3,513.2 1130.8,529.4 1131.4,528.9 C1132.2,528.4 1133.3,506.8 1134.3,504.1 C1134.7,503.0 1136.6,513.6 1137.2,513.6 C1137.8,513.6 1138.7,506.5 1139.1,504.1 C1139.9,497.9 1141.3,479.5 1141.9,479.2 C1142.5,479.0 1142.5,496.9 1143.9,502.2 C1144.2,503.6 1147.3,505.7 1148.6,506.0 C1149.9,506.2 1153.0,504.1 1154.4,504.1 C1155.4,504.1 1157.2,506.0 1158.2,506.0 C1159.8,506.0 1163.9,503.6 1165.0,504.1 C1165.9,504.5 1165.4,508.6 1165.8,509.8 C1165.9,510.0 1166.8,510.0 1166.9,509.8 C1168.0,508.1 1169.5,503.1 1170.7,502.2 C1171.4,501.7 1173.6,504.1 1174.6,504.1 C1175.5,504.1 1177.4,502.6 1178.4,502.2 C1179.8,501.6 1182.8,500.0 1184.1,500.3 C1185.2,500.5 1187.0,503.8 1187.9,504.1 C1188.4,504.2 1189.3,501.3 1189.5,501.8 C1190.3,506.3 1191.1,524.1 1191.8,524.1 C1192.4,524.2 1193.8,507.7 1194.6,502.2 C1195.2,498.1 1196.5,485.9 1197.1,485.9 C1197.7,485.9 1198.7,498.1 1199.4,502.2 C1200.0,505.3 1201.6,514.8 1202.3,514.6 C1203.0,514.3 1204.7,503.9 1205.1,500.3 C1206.0,493.8 1206.8,474.5 1207.4,474.5 C1208.0,474.5 1209.1,493.8 1209.9,500.3 C1210.3,503.6 1211.8,513.6 1212.4,513.6 C1213.0,513.6 1214.3,503.6 1214.7,500.3 C1215.6,491.7 1216.8,465.9 1217.5,465.9 C1218.3,465.9 1219.4,491.7 1220.4,500.3 C1220.6,502.2 1221.4,507.7 1222.3,507.9 C1223.3,508.1 1226.5,503.1 1228.1,502.2 C1228.7,501.8 1230.5,502.3 1231.2,502.7 C1232.1,503.0 1233.5,504.6 1234.4,505.0 C1235.1,505.2 1236.8,505.2 1237.6,505.0 C1238.4,504.9 1240.0,504.0 1240.8,503.9 C1241.6,503.8 1243.2,504.3 1244.0,504.1 C1244.8,503.8 1246.3,502.0 1247.2,502.2 C1249.1,502.5 1253.1,506.2 1254.8,506.0 C1256.4,505.8 1259.1,501.7 1260.5,500.3 C1261.5,499.3 1263.4,496.4 1264.4,496.4 C1265.5,496.4 1267.8,499.8 1269.1,500.3 C1270.4,500.7 1273.5,500.3 1275.0,500.3 L1275.0,500.6 Z" fill="rgba(255,0,0,0.3)" stroke="none"/>
<path d="M62.0,506.9 C62.1,506.9 62.2,506.9 62.3,506.9 C62.6,509.0 63.0,515.3 63.6,515.5 C64.1,515.8 65.4,510.2 66.5,508.9 C67.1,508.1 69.3,507.4 70.3,506.9 C71.2,506.5 73.5,505.8 74.1,505.0 C75.6,503.2 78.2,496.3 78.9,496.4 C79.6,496.6 79.0,504.7 79.8,506.0 C80.2,506.6 83.0,503.6 83.7,504.1 C84.9,505.0 87.0,512.6 87.5,511.7 C88.5,509.9 88.7,495.2 89.4,493.6 C89.7,492.8 91.5,503.5 91.7,502.2 C92.6,496.6 93.7,465.9 94.2,465.9 C94.6,465.9 94.8,493.8 95.5,502.2 C95.5,502.6 97.0,501.6 97.0,501.1 C97.9,495.1 98.8,476.0 99.3,476.4 C100.0,476.8 100.7,499.9 101.8,504.1 C102.1,505.2 104.5,497.0 105.1,497.4 C105.9,498.0 106.4,506.8 107.5,507.9 C108.2,508.5 111.9,505.5 112.3,504.1 C113.7,499.7 114.1,484.5 114.6,485.0 C115.3,485.5 115.7,504.6 117.1,507.9 C117.5,508.9 120.5,502.8 121.9,502.2 C122.7,501.8 124.9,504.1 125.7,504.1 C126.2,504.0 127.1,501.3 127.2,501.8 C128.0,504.2 128.9,515.5 129.5,515.5 C130.1,515.5 131.0,504.2 131.8,501.8 C132.0,501.3 132.8,504.0 133.3,504.1 C134.2,504.1 136.3,502.0 137.2,502.2 C138.2,502.4 140.0,505.9 141.0,506.0 C141.9,506.1 144.1,502.8 144.8,503.1 C146.0,503.7 148.2,510.7 148.6,509.8 C149.7,507.6 149.9,491.0 150.5,490.7 C151.1,490.5 152.0,505.2 153.4,507.9 C153.9,508.8 156.9,505.3 158.2,505.0 C159.1,504.8 161.7,506.7 162.0,506.0 C163.4,502.7 164.2,488.8 164.9,488.8 C165.6,488.8 166.3,505.1 167.7,506.0 C168.8,506.6 173.5,494.9 174.9,494.7 C176.0,494.6 176.7,503.3 177.8,504.7 C178.2,505.3 180.5,503.3 181.1,502.5 C182.4,501.0 184.5,495.3 185.2,495.8 C186.2,496.7 186.7,507.0 187.8,508.1 C188.5,508.7 191.2,503.9 192.3,502.5 C193.1,501.4 195.2,497.5 195.6,498.1 C196.6,499.2 197.0,508.5 197.9,509.2 C198.4,509.7 200.0,504.1 201.2,502.9 C202.0,502.1 204.5,501.2 205.7,501.0 C206.7,500.8 209.0,501.2 210.1,501.3 C211.2,501.4 213.4,501.8 214.6,501.9 C215.4,502.0 217.1,501.9 217.9,501.9 C218.7,501.9 220.4,501.8 221.3,501.7 C222.1,501.5 223.7,500.9 224.6,500.8 C225.4,500.8 227.1,501.0 227.9,501.0 C229.1,501.1 231.3,501.0 232.4,501.2 C233.5,501.3 235.7,502.2 236.9,502.3 C237.8,502.3 239.6,501.5 240.6,501.4 C241.5,501.4 243.4,501.9 244.3,501.9 C245.2,501.9 247.1,501.5 248.0,501.4 C248.9,501.3 250.8,501.0 251.7,501.1 C252.7,501.2 254.5,502.2 255.4,502.3 C256.3,502.4 258.2,501.9 259.1,501.9 C260.1,501.8 261.9,501.9 262.9,501.9 C263.8,501.9 265.7,502.1 266.6,502.0 C267.5,501.9 269.4,501.1 270.3,501.0 C271.1,501.0 272.6,501.9 273.4,501.9 C274.2,501.9 275.7,501.1 276.5,501.1 C277.3,501.1 278.8,501.7 279.6,501.8 C280.4,501.9 282.0,501.7 282.8,501.8 C283.5,501.9 285.1,502.2 285.9,502.3 C286.8,502.4 288.5,502.7 289.4,502.7 C290.3,502.8 292.1,502.7 293.0,502.6 C293.9,502.5 295.7,502.0 296.6,502.1 C297.5,502.2 299.2,503.1 300.1,503.2 C301.0,503.3 302.8,503.0 303.7,502.9 C304.6,502.8 306.5,502.5 307.4,502.4 C308.3,502.3 310.2,502.2 311.1,502.1 C312.1,502.0 313.9,501.7 314.8,501.6 C315.8,501.6 317.6,502.2 318.5,502.1 C319.4,502.0 321.2,501.1 322.2,501.0 C323.0,500.9 324.9,501.3 325.8,501.3 C326.7,501.3 328.6,500.7 329.5,500.7 C329.6,500.7 329.9,501.1 330.0,501.0 C331.0,500.7 332.9,499.2 333.9,499.2 C335.0,499.1 337.2,500.4 338.4,500.7 C339.5,501.0 341.7,501.2 342.8,501.4 C343.6,501.5 345.2,502.0 345.9,502.0 C346.7,502.1 348.3,501.6 349.1,501.4 C349.8,501.3 351.4,501.0 352.2,500.9 C353.0,500.8 354.5,500.7 355.3,500.7 C356.1,500.7 357.7,500.9 358.4,501.0 C359.4,501.2 361.2,502.0 362.1,502.2 C363.1,502.5 364.9,502.8 365.9,502.9 C366.8,503.0 368.6,502.9 369.6,502.9 C371.2,502.9 375.2,503.7 376.3,502.9 C377.3,502.0 377.4,496.5 378.0,496.3 C378.5,496.1 379.7,500.5 380.7,501.0 C382.0,501.7 385.7,501.1 387.4,501.0 C387.7,501.0 388.4,500.9 388.5,500.7 C389.0,498.5 389.2,491.3 389.6,491.4 C390.1,491.4 390.7,499.2 391.9,501.0 C392.4,501.9 395.2,502.1 396.3,502.3 C397.4,502.5 399.7,502.6 400.8,502.6 C401.6,502.6 403.3,502.5 404.1,502.5 C404.9,502.5 406.6,502.8 407.5,502.7 C408.3,502.6 409.9,501.9 410.8,501.7 C411.6,501.5 413.3,501.1 414.1,501.0 C415.1,501.0 417.0,500.9 417.9,501.1 C418.8,501.3 420.6,502.3 421.6,502.5 C422.5,502.6 424.4,502.4 425.3,502.3 C426.4,502.1 428.7,501.9 429.7,501.6 C430.9,501.3 433.1,499.8 434.2,499.8 C435.8,499.9 439.2,501.7 440.9,501.9 C442.0,502.0 444.2,501.5 445.3,501.4 C446.5,501.2 448.7,500.8 449.8,500.7 C450.6,500.6 452.3,500.4 453.1,500.4 C454.0,500.4 455.6,500.7 456.5,500.7 C457.3,500.8 459.0,501.0 459.8,501.1 C460.7,501.2 462.3,501.6 463.2,501.6 C463.9,501.7 465.5,501.2 466.3,501.2 C467.1,501.2 468.6,501.8 469.4,501.8 C470.2,501.8 471.7,501.1 472.5,501.1 C473.3,501.2 474.9,501.8 475.6,501.9 C476.4,502.1 478.0,502.3 478.8,502.3 C479.6,502.2 481.1,501.4 481.9,501.3 C482.6,501.2 484.2,501.3 485.0,501.4 C486.5,501.6 489.6,502.1 491.1,502.3 C491.9,502.3 493.5,502.3 494.3,502.3 C495.1,502.4 496.7,502.9 497.5,502.8 C498.3,502.7 499.9,501.8 500.7,501.6 C501.5,501.5 503.1,501.7 503.9,501.7 C504.7,501.8 506.3,502.1 507.1,502.1 C507.9,502.0 509.4,501.3 510.2,501.2 C511.0,501.2 512.6,501.6 513.4,501.6 C514.2,501.7 515.8,501.6 516.6,501.7 C517.4,501.9 519.0,502.6 519.8,502.6 C520.6,502.7 522.2,502.1 523.0,502.0 C523.8,502.0 525.4,502.0 526.2,502.1 C527.0,502.1 528.5,502.6 529.3,502.7 C530.1,502.8 531.7,502.8 532.5,502.7 C533.3,502.6 534.9,502.0 535.7,501.9 C536.5,501.8 538.1,501.9 538.9,501.8 C539.7,501.8 541.3,501.5 542.1,501.5 C542.9,501.4 544.5,501.1 545.3,501.1 C546.1,501.1 547.6,501.2 548.4,501.3 C549.2,501.3 550.8,501.4 551.6,501.3 C552.4,501.3 554.0,500.8 554.8,500.8 C555.6,500.8 557.2,501.4 558.0,501.4 C558.8,501.4 560.4,501.1 561.2,501.0 C562.0,501.0 563.6,501.1 564.4,501.2 C565.2,501.2 566.7,501.7 567.5,501.7 C568.3,501.7 569.9,501.4 570.7,501.3 C571.5,501.3 573.1,501.3 573.9,501.4 C574.7,501.6 576.3,502.5 577.1,502.5 C577.9,502.5 579.5,501.8 580.3,501.6 C581.1,501.5 582.7,501.5 583.5,501.3 C584.4,501.1 585.9,500.2 586.8,500.0 C587.5,499.9 589.3,499.8 590.0,500.1 C590.4,500.2 591.0,501.3 591.4,501.4 C591.9,501.5 593.4,501.0 593.5,500.5 C594.7,490.9 596.0,460.7 596.7,460.7 C597.3,460.8 598.0,490.9 598.5,501.0 C598.6,503.0 598.7,507.3 599.1,509.1 C599.1,509.3 600.0,509.5 600.0,509.3 C600.8,505.7 601.9,494.4 602.5,494.0 C603.1,493.7 603.8,506.8 604.5,506.8 C605.1,506.7 607.0,493.5 607.6,493.4 C608.2,493.2 608.7,504.4 609.6,505.5 C610.0,506.0 612.0,499.8 612.7,499.7 C613.3,499.7 614.0,504.4 614.6,504.8 C615.0,505.1 616.1,502.2 616.6,502.3 C617.2,502.5 618.4,506.0 619.1,506.1 C619.7,506.2 621.2,503.8 621.7,502.9 C622.7,500.8 624.5,492.9 624.8,494.0 C625.6,496.8 625.8,512.2 626.1,518.2 C626.5,525.2 627.3,546.8 627.8,546.2 C628.3,545.6 629.1,521.4 629.9,513.1 C630.4,508.6 632.3,496.5 633.1,495.3 C633.6,494.6 634.5,502.9 635.0,505.5 C635.3,506.8 636.1,511.4 636.3,510.6 C636.9,507.5 637.6,491.6 638.2,490.2 C638.6,489.4 639.3,500.1 640.1,501.7 C640.4,502.2 642.0,498.7 642.7,498.5 C643.1,498.3 644.4,499.7 644.6,500.4 C645.4,503.4 646.0,513.0 646.5,513.1 C646.9,513.3 647.7,502.5 648.4,501.7 C648.8,501.2 650.7,506.3 651.0,508.0 C651.9,513.4 652.8,529.5 653.2,529.7 C653.7,529.8 653.9,514.2 654.8,509.3 C654.9,508.4 656.8,507.5 657.3,506.8 C658.0,505.9 659.6,504.0 659.9,502.9 C660.9,498.6 661.8,489.6 662.4,485.1 C662.9,481.9 664.1,471.2 664.3,472.4 C664.9,475.0 664.6,493.8 665.6,500.4 C665.7,501.3 668.3,501.6 668.8,502.3 C669.7,503.8 671.0,507.5 671.3,509.3 C672.2,513.4 673.2,525.9 673.6,525.9 C674.1,525.9 674.4,513.3 675.2,509.3 C675.4,507.9 676.9,504.9 677.7,504.2 C678.1,503.9 679.7,504.9 680.0,505.5 C681.0,507.2 682.5,513.1 683.2,513.1 C683.8,513.1 684.5,506.1 685.1,505.5 C685.4,505.1 686.6,509.5 687.0,509.3 C687.7,509.0 688.8,504.2 689.6,503.6 C689.9,503.3 691.1,504.9 691.5,505.5 C692.1,506.5 692.9,510.1 693.4,509.9 C694.0,509.7 695.0,504.6 695.9,503.6 C696.3,503.2 698.2,504.6 698.5,504.2 C699.3,502.9 699.9,496.6 700.4,496.6 C700.9,496.6 701.5,503.2 702.3,504.2 C702.6,504.6 704.4,502.9 704.8,502.3 C705.6,501.3 706.8,497.8 707.4,497.8 C708.0,497.9 708.6,501.8 709.3,502.9 C709.7,503.7 711.6,504.7 711.8,505.5 C712.7,507.8 713.3,515.8 713.8,515.7 C714.3,515.5 714.8,506.3 715.7,504.2 C715.9,503.7 717.9,504.9 718.2,505.5 C719.2,507.1 720.3,513.4 720.8,513.1 C721.4,512.8 721.7,505.1 722.7,502.9 C723.0,502.2 725.6,501.1 725.9,501.7 C726.8,503.6 727.2,512.8 727.8,513.1 C728.2,513.4 729.5,503.1 729.7,504.2 C730.3,507.4 730.7,531.0 731.0,530.3 C731.3,529.4 731.8,498.3 732.2,497.8 C732.6,497.4 734.0,526.0 734.5,526.5 C735.0,526.9 734.9,506.7 736.1,501.7 C736.2,500.8 738.9,502.6 739.9,502.9 C740.8,503.2 742.9,504.5 743.7,504.2 C744.8,503.8 747.2,501.6 747.5,500.4 C748.6,496.2 749.0,482.0 749.4,482.5 C750.0,483.3 750.3,499.9 751.3,505.5 C751.6,506.8 753.8,509.7 754.5,509.9 C755.0,510.1 755.9,507.5 756.4,506.8 C757.4,505.4 759.4,502.6 760.6,501.4 C760.9,501.1 762.2,500.5 762.3,500.9 C763.2,503.6 763.9,513.4 764.6,513.6 C765.2,513.8 765.8,504.4 767.3,502.5 C768.2,501.4 772.3,501.7 774.0,501.4 C774.8,501.3 777.1,501.6 777.2,500.9 C778.5,494.7 779.0,473.3 779.5,473.5 C780.1,473.7 781.0,495.3 781.8,502.5 C782.4,508.4 784.4,525.6 785.1,525.9 C785.8,526.2 785.7,508.3 787.3,504.7 C787.9,503.6 792.6,507.2 794.0,507.0 C795.2,506.8 797.7,504.2 798.0,502.8 C799.2,497.5 799.7,480.3 800.3,480.2 C800.8,480.2 801.7,500.1 802.5,502.5 C802.8,503.5 804.1,493.6 804.7,493.6 C805.3,493.6 806.3,500.5 807.4,502.5 C808.1,503.9 811.6,508.1 811.9,507.0 C813.2,501.4 813.1,476.1 813.6,475.8 C814.2,475.5 814.4,499.4 816.3,504.7 C816.8,506.0 821.3,502.5 823.0,502.5 C824.7,502.5 828.0,504.3 829.7,504.7 C830.5,505.0 832.2,505.0 833.0,505.2 C833.9,505.4 835.5,506.3 836.4,506.4 C837.2,506.5 838.9,506.0 839.7,506.1 C840.6,506.2 842.3,507.2 843.1,507.0 C844.8,506.3 848.0,502.8 849.7,502.5 C851.3,502.2 854.8,504.8 856.4,504.7 C857.9,504.7 861.8,503.4 862.4,502.0 C863.9,498.4 864.0,484.6 864.7,484.7 C865.3,484.7 866.6,498.1 867.6,502.5 C868.2,505.3 869.9,513.0 870.9,513.6 C871.6,514.1 873.2,508.5 874.2,507.0 C875.1,505.8 878.2,504.2 878.6,502.8 C879.9,498.6 880.4,484.7 880.9,484.7 C881.5,484.6 881.9,498.4 883.2,502.5 C883.6,504.0 886.4,506.6 887.6,507.0 C888.6,507.2 891.0,505.4 892.1,504.8 C893.2,504.3 895.4,502.9 896.5,502.5 C897.5,502.2 899.7,502.2 900.8,502.0 C901.8,501.9 903.9,501.5 905.0,501.4 C906.0,501.3 908.0,500.9 908.9,501.0 C910.1,501.2 912.2,502.4 913.4,502.7 C914.5,503.0 916.7,503.6 917.8,503.5 C919.0,503.4 921.1,501.8 922.3,501.6 C923.1,501.5 924.8,502.3 925.6,502.3 C926.5,502.2 928.1,501.3 929.0,501.2 C929.8,501.0 931.5,501.0 932.3,501.0 C933.1,501.0 934.8,501.0 935.7,501.0 C936.5,501.1 938.3,501.3 939.2,501.2 C940.1,501.2 941.9,500.6 942.8,500.6 C943.7,500.6 945.4,501.3 946.4,501.4 C947.2,501.5 949.0,501.4 949.9,501.2 C950.8,501.1 952.6,500.3 953.5,500.3 C954.3,500.3 956.0,501.3 956.8,501.3 C957.6,501.3 959.3,500.7 960.2,500.7 C961.0,500.6 962.7,500.8 963.5,500.9 C964.3,501.0 966.0,501.4 966.9,501.4 C967.8,501.4 969.6,501.0 970.6,501.0 C971.5,501.1 973.3,501.6 974.3,501.7 C975.2,501.8 977.1,501.8 978.0,501.9 C978.8,502.0 980.3,502.5 981.1,502.5 C981.9,502.6 983.5,502.6 984.2,502.6 C985.0,502.5 986.6,502.4 987.4,502.2 C988.2,501.9 989.7,501.1 990.5,500.9 C991.2,500.8 992.8,501.0 993.6,501.0 C994.5,501.0 996.4,500.8 997.3,501.0 C998.3,501.1 1000.1,502.0 1001.0,502.1 C1001.9,502.3 1003.8,501.9 1004.7,501.9 C1005.7,501.9 1007.5,502.1 1008.4,502.0 C1009.4,502.0 1011.2,501.6 1012.2,501.4 C1013.1,501.1 1014.9,500.4 1015.9,500.3 C1016.7,500.2 1018.4,500.1 1019.2,500.2 C1020.1,500.4 1021.7,501.5 1022.6,501.7 C1023.4,501.9 1025.1,501.7 1025.9,501.7 C1026.7,501.6 1028.4,501.4 1029.2,501.4 C1030.1,501.4 1031.8,501.4 1032.6,501.4 C1033.4,501.4 1035.1,501.6 1035.9,501.7 C1036.8,501.9 1038.4,502.6 1039.3,502.6 C1040.1,502.6 1041.8,502.0 1042.6,501.9 C1043.5,501.8 1045.4,501.9 1046.3,501.8 C1047.3,501.8 1049.1,501.8 1050.0,501.7 C1051.0,501.6 1052.8,501.1 1053.8,501.0 C1054.1,501.0 1054.7,501.3 1055.0,501.2 C1056.2,500.7 1058.6,498.6 1059.8,498.3 C1060.4,498.2 1062.1,499.1 1062.3,499.8 C1063.3,503.9 1063.8,516.8 1064.6,517.5 C1065.1,517.9 1066.3,507.2 1067.4,504.1 C1067.9,502.7 1070.2,500.0 1071.2,499.3 C1071.6,499.0 1073.2,499.6 1073.3,500.1 C1074.3,505.8 1075.0,523.6 1075.6,524.1 C1076.2,524.6 1077.1,505.4 1077.9,504.1 C1078.4,503.3 1080.0,515.3 1080.8,515.5 C1081.5,515.8 1083.0,506.3 1083.7,506.0 C1084.2,505.8 1084.9,513.4 1085.6,513.6 C1086.1,513.8 1088.1,507.2 1088.4,507.9 C1089.3,509.8 1089.8,524.6 1090.4,524.1 C1091.0,523.6 1092.6,509.1 1093.2,504.1 C1094.0,497.4 1095.1,477.3 1095.7,477.3 C1096.3,477.3 1097.1,497.5 1098.0,504.1 C1098.3,506.5 1100.3,514.0 1100.9,513.6 C1101.6,513.2 1102.3,503.7 1103.2,501.1 C1103.3,500.8 1104.3,501.9 1104.7,502.2 C1105.6,502.7 1108.2,503.1 1108.5,504.1 C1109.7,507.4 1110.2,519.4 1110.8,519.4 C1111.4,519.4 1112.9,507.9 1113.3,504.1 C1114.1,496.0 1115.2,471.1 1115.8,471.6 C1116.4,472.1 1117.0,498.9 1118.1,507.9 C1118.3,510.4 1120.3,517.7 1120.9,517.5 C1121.7,517.2 1123.3,508.9 1123.8,506.0 C1124.6,501.5 1125.5,487.6 1126.1,487.8 C1126.7,488.1 1127.9,502.9 1128.6,507.9 C1129.3,513.2 1130.8,529.4 1131.4,528.9 C1132.2,528.4 1133.3,506.8 1134.3,504.1 C1134.7,503.0 1136.6,513.6 1137.2,513.6 C1137.8,513.6 1138.7,506.5 1139.1,504.1 C1139.9,497.9 1141.3,479.5 1141.9,479.2 C1142.5,479.0 1142.5,496.9 1143.9,502.2 C1144.2,503.6 1147.3,505.7 1148.6,506.0 C1149.9,506.2 1153.0,504.1 1154.4,504.1 C1155.4,504.1 1157.2,506.0 1158.2,506.0 C1159.8,506.0 1163.9,503.6 1165.0,504.1 C1165.9,504.5 1165.4,508.6 1165.8,509.8 C1165.9,510.0 1166.8,510.0 1166.9,509.8 C1168.0,508.1 1169.5,503.1 1170.7,502.2 C1171.4,501.7 1173.6,504.1 1174.6,504.1 C1175.5,504.1 1177.4,502.6 1178.4,502.2 C1179.8,501.6 1182.8,500.0 1184.1,500.3 C1185.2,500.5 1187.0,503.8 1187.9,504.1 C1188.4,504.2 1189.3,501.3 1189.5,501.8 C1190.3,506.3 1191.1,524.1 1191.8,524.1 C1192.4,524.2 1193.8,507.7 1194.6,502.2 C1195.2,498.1 1196.5,485.9 1197.1,485.9 C1197.7,485.9 1198.7,498.1 1199.4,502.2 C1200.0,505.3 1201.6,514.8 1202.3,514.6 C1203.0,514.3 1204.7,503.9 1205.1,500.3 C1206.0,493.8 1206.8,474.5 1207.4,474.5 C1208.0,474.5 1209.1,493.8 1209.9,500.3 C1210.3,503.6 1211.8,513.6 1212.4,513.6 C1213.0,513.6 1214.3,503.6 1214.7,500.3 C1215.6,491.7 1216.8,465.9 1217.5,465.9 C1218.3,465.9 1219.4,491.7 1220.4,500.3 C1220.6,502.2 1221.4,507.7 1222.3,507.9 C1223.3,508.1 1226.5,503.1 1228.1,502.2 C1228.7,501.8 1230.5,502.3 1231.2,502.7 C1232.1,503.0 1233.5,504.6 1234.4,505.0 C1235.1,505.2 1236.8,505.2 1237.6,505.0 C1238.4,504.9 1240.0,504.0 1240.8,503.9 C1241.6,503.8 1243.2,504.3 1244.0,504.1 C1244.8,503.8 1246.3,502.0 1247.2,502.2 C1249.1,502.5 1253.1,506.2 1254.8,506.0 C1256.4,505.8 1259.1,501.7 1260.5,500.3 C1261.5,499.3 1263.4,496.4 1264.4,496.4 C1265.5,496.4 1267.8,499.8 1269.1,500.3 C1270.4,500.7 1273.5,500.3 1275.0,500.3" stroke="rgba(255,0,0,0.8)" stroke-width="1" fill="none" stroke-linejoin="round"/>
</g>
<text transform="translate(51,298.4) scale(0.81,1)" text-anchor="end" font-size="11" font-family="Liberation Sans" fill="#666">6</text>
<text transform="translate(51,332.4) scale(0.81,1)" text-anchor="end" font-size="11" font-family="Liberation Sans" fill="#666">5</text>
<text transform="translate(51,366.4) scale(0.81,1)" text-anchor="end" font-size="11" font-family="Liberation Sans" fill="#666">4</text>
<text transform="translate(51,401.4) scale(0.81,1)" text-anchor="end" font-size="11" font-family="Liberation Sans" fill="#666">3</text>
<text transform="translate(51,435.4) scale(0.81,1)" text-anchor="end" font-size="11" font-family="Liberation Sans" fill="#666">2</text>
<text transform="translate(51,470.4) scale(0.81,1)" text-anchor="end" font-size="11" font-family="Liberation Sans" fill="#666">1</text>
<text transform="translate(51,504.4) scale(0.81,1)" text-anchor="end" font-size="11" font-family="Liberation Sans" fill="#666">0</text>
<text transform="translate(51,539.4) scale(0.81,1)" text-anchor="end" font-size="11" font-family="Liberation Sans" fill="#666">-1</text>
<text transform="translate(51,573.4) scale(0.81,1)" text-anchor="end" font-size="11" font-family="Liberation Sans" fill="#666">-2</text>
<text transform="translate(1286,297.4) scale(0.81,1)" font-size="11" font-family="Liberation Sans" fill="#666">100</text>
<text transform="translate(1286,324.9) scale(0.81,1)" font-size="11" font-family="Liberation Sans" fill="#666">90</text>
<text transform="translate(1286,352.4) scale(0.81,1)" font-size="11" font-family="Liberation Sans" fill="#666">80</text>
<text transform="translate(1286,379.9) scale(0.81,1)" font-size="11" font-family="Liberation Sans" fill="#666">70</text>
<text transform="translate(1286,407.4) scale(0.81,1)" font-size="11" font-family="Liberation Sans" fill="#666">60</text>
<text transform="translate(1286,434.9) scale(0.81,1)" font-size="11" font-family="Liberation Sans" fill="#666">50</text>
<text transform="translate(1286,462.4) scale(0.81,1)" font-size="11" font-family="Liberation Sans" fill="#666">40</text>
<text transform="translate(1286,489.9) scale(0.81,1)" font-size="11" font-family="Liberation Sans" fill="#666">30</text>
<text transform="translate(1286,517.4) scale(0.81,1)" font-size="11" font-family="Liberation Sans" fill="#666">20</text>
<text transform="translate(1286,544.9) scale(0.81,1)" font-size="11" font-family="Liberation Sans" fill="#666">10</text>
<text transform="translate(1286,572.4) scale(0.81,1)" font-size="11" font-family="Liberation Sans" fill="#666">0</text>
<text transform="translate(69.9,586.8) scale(0.84,1) rotate(-45)" text-anchor="end" font-size="11" font-family="Liberation Sans" fill="#666">09:23</text>
<text transform="translate(140.8,586.8) scale(0.84,1) rotate(-45)" text-anchor="end" font-size="11" font-family="Liberation Sans" fill="#666">09:30</text>
<text transform="translate(211.8,586.8) scale(0.84,1) rotate(-45)" text-anchor="end" font-size="11" font-family="Liberation Sans" fill="#666">09:37</text>
<text transform="translate(282.7,586.8) scale(0.84,1) rotate(-45)" text-anchor="end" font-size="11" font-family="Liberation Sans" fill="#666">09:44</text>
<text transform="translate(353.7,586.8) scale(0.84,1) rotate(-45)" text-anchor="end" font-size="11" font-family="Liberation Sans" fill="#666">09:51</text>
<text transform="translate(424.6,586.8) scale(0.84,1) rotate(-45)" text-anchor="end" font-size="11" font-family="Liberation Sans" fill="#666">09:58</text>
<text transform="translate(495.5,586.8) scale(0.84,1) rotate(-45)" text-anchor="end" font-size="11" font-family="Liberation Sans" fill="#666">10:05</text>
<text transform="translate(566.5,586.8) scale(0.84,1) rotate(-45)" text-anchor="end" font-size="11" font-family="Liberation Sans" fill="#666">10:12</text>
<text transform="translate(637.4,586.8) scale(0.84,1) rotate(-45)" text-anchor="end" font-size="11" font-family="Liberation Sans" fill="#666">10:19</text>
<text transform="translate(708.4,586.8) scale(0.84,1) rotate(-45)" text-anchor="end" font-size="11" font-family="Liberation Sans" fill="#666">10:26</text>
<text transform="translate(779.3,586.8) scale(0.84,1) rotate(-45)" text-anchor="end" font-size="11" font-family="Liberation Sans" fill="#666">10:33</text>
<text transform="translate(850.2,586.8) scale(0.84,1) rotate(-45)" text-anchor="end" font-size="11" font-family="Liberation Sans" fill="#666">10:40</text>
<text transform="translate(921.2,586.8) scale(0.84,1) rotate(-45)" text-anchor="end" font-size="11" font-family="Liberation Sans" fill="#666">10:47</text>
<text transform="translate(992.1,586.8) scale(0.84,1) rotate(-45)" text-anchor="end" font-size="11" font-family="Liberation Sans" fill="#666">10:54</text>
<text transform="translate(1063.1,586.8) scale(0.84,1) rotate(-45)" text-anchor="end" font-size="11" font-family="Liberation Sans" fill="#666">11:01</text>
<text transform="translate(1134.0,586.8) scale(0.84,1) rotate(-45)" text-anchor="end" font-size="11" font-family="Liberation Sans" fill="#666">11:08</text>
<text transform="translate(1204.9,586.8) scale(0.84,1) rotate(-45)" text-anchor="end" font-size="11" font-family="Liberation Sans" fill="#666">11:15</text>
<text transform="translate(1275.9,586.8) scale(0.84,1) rotate(-45)" text-anchor="end" font-size="11" font-family="Liberation Sans" fill="#666">11:22</text>
<text transform="translate(31.8,431.3) rotate(-90)" text-anchor="middle" font-size="12" textLength="58.5" lengthAdjust="spacingAndGlyphs" font-family="Liberation Sans" fill="#666">Leistung [kW]</text>
<text transform="translate(1313.3,431.8) rotate(90)" text-anchor="middle" font-size="12" textLength="35" lengthAdjust="spacingAndGlyphs" font-family="Liberation Sans" fill="#666">SoC [%]</text>
<rect x="273.3" y="272.1" width="39.3" height="11.3" fill="rgba(255,0,0,0.3)" stroke="#ff5050" stroke-width="1.2"/>
<text x="319.2" y="281.2" font-size="12" textLength="20" lengthAdjust="spacingAndGlyphs" font-family="Liberation Sans" fill="#747474">EVU</text>
<rect x="349.6" y="272.5" width="38.5" height="10.5" fill="#c8c8c8" stroke="#333" stroke-width="2"/>
<text x="395.7" y="281.2" font-size="12" textLength="66" lengthAdjust="spacingAndGlyphs" font-family="Liberation Sans" fill="#747474">Hausverbrauch</text>
<rect x="472.2" y="272.0" width="39.5" height="11.5" fill="#e6e6fa" stroke="#d8d8f0" stroke-width="1"/>
<text x="518" y="281.2" font-size="12" textLength="33" lengthAdjust="spacingAndGlyphs" font-family="Liberation Sans" fill="#747474">LP ges.</text>
<rect x="562.0" y="272.2" width="39.0" height="11.0" fill="rgba(0,255,0,0.3)" stroke="#22ff22" stroke-width="1.5"/>
<text x="607.4" y="281.2" font-size="12" textLength="34" lengthAdjust="spacingAndGlyphs" font-family="Liberation Sans" fill="#747474">PV ges.</text>
<rect x="652.1" y="272.2" width="39.0" height="11.0" fill="#4545ff" stroke="#1a1aff" stroke-width="1.5"/>
<text x="698.4" y="281.2" font-size="12" textLength="19.6" lengthAdjust="spacingAndGlyphs" font-family="Liberation Sans" fill="#747474">LP 3</text>
<rect x="728.7" y="272.5" width="38.5" height="10.5" fill="#e0e0e6" stroke="#7070ff" stroke-width="2" stroke-dasharray="9,4.5"/>
<text x="774.7" y="281.2" font-size="12" textLength="42.3" lengthAdjust="spacingAndGlyphs" font-family="Liberation Sans" fill="#747474">EV SoC 1</text>
<rect x="827.9" y="272.1" width="39.3" height="11.3" fill="rgba(200,255,0,0.3)" stroke="#ffb84d" stroke-width="1.2"/>
<text x="873.8" y="281.2" font-size="12" textLength="59.4" lengthAdjust="spacingAndGlyphs" font-family="Liberation Sans" fill="#747474">Speicher ges.</text>
<rect x="943.6" y="272.5" width="38.5" height="10.5" fill="rgba(230,255,120,0.45)" stroke="#ffad33" stroke-width="2" stroke-dasharray="9,4.5"/>
<text x="989.7" y="281.2" font-size="12" textLength="81.5" lengthAdjust="spacingAndGlyphs" font-family="Liberation Sans" fill="#747474">Speicher ges. SoC</text>
</svg><!--/CHART-->
</body></html>
